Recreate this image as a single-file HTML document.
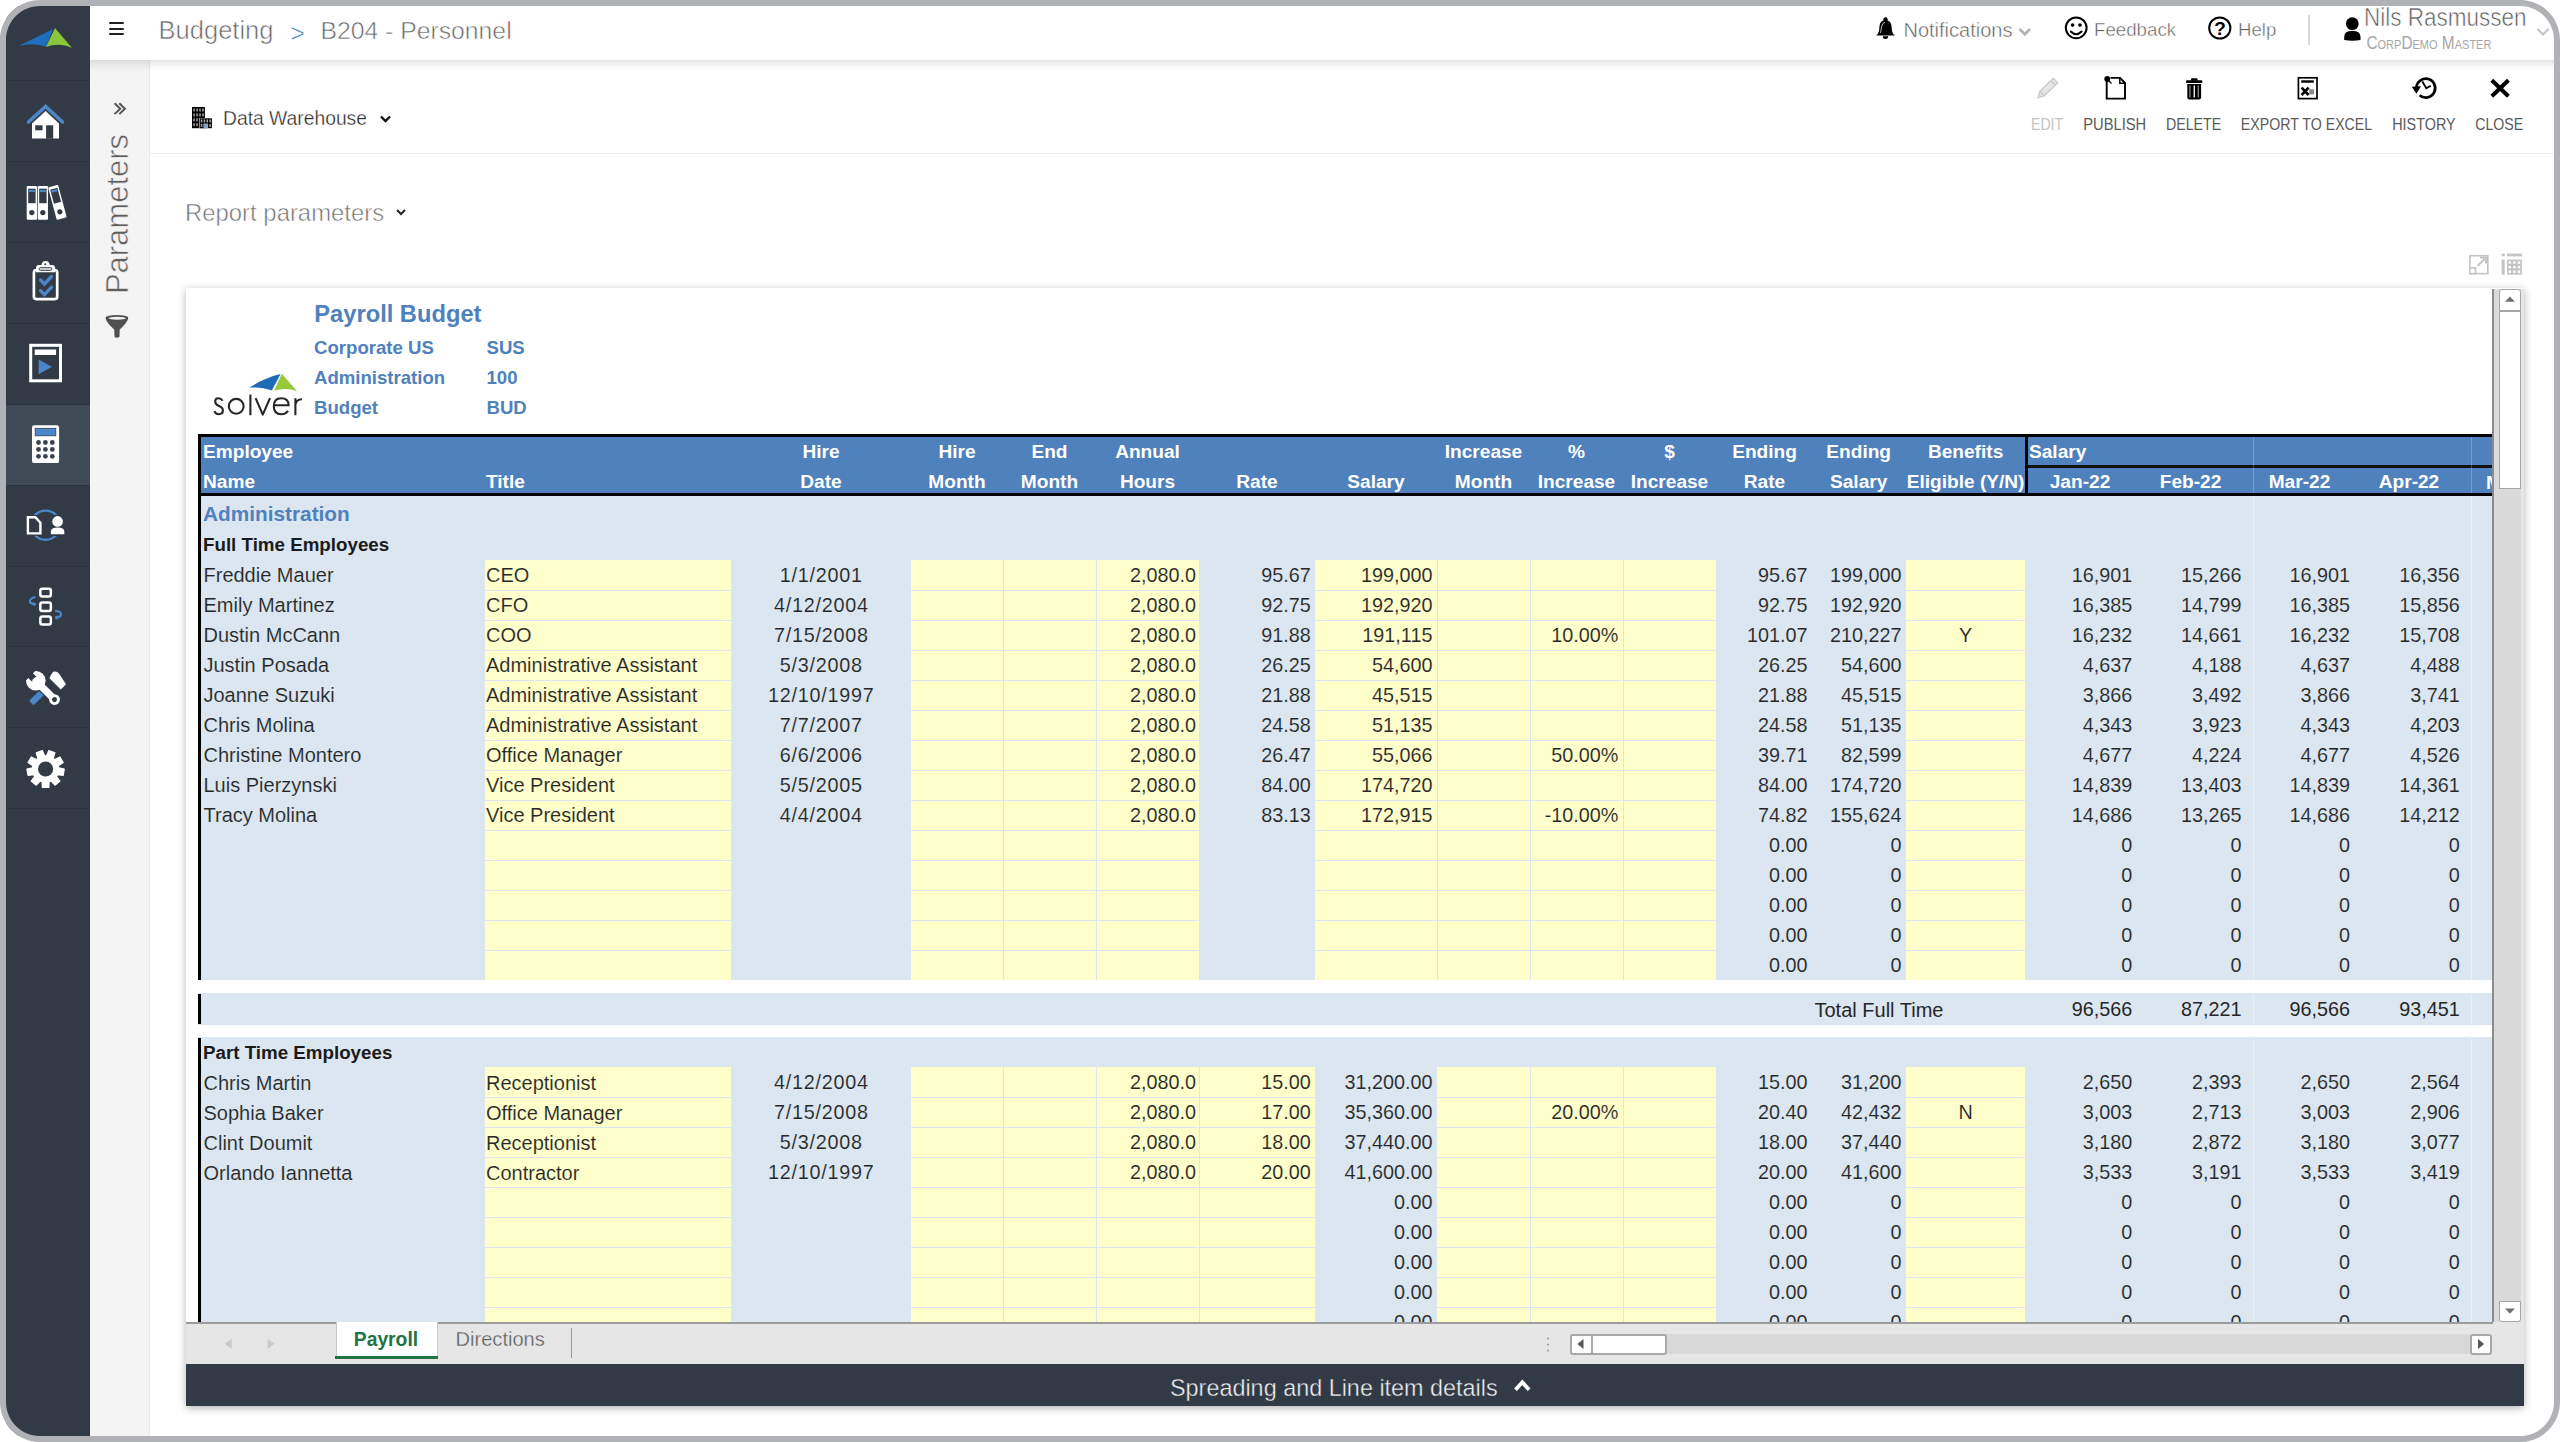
<!DOCTYPE html><html><head><meta charset="utf-8"><style>
html,body{margin:0;padding:0;}
body{width:2560px;height:1442px;position:relative;overflow:hidden;background:#fff;font-family:"Liberation Sans",sans-serif;}
.t{position:absolute;white-space:nowrap;}
.r{position:absolute;}
svg{position:absolute;overflow:visible;}
</style></head><body>
<div class="r" style="left:6px;top:6px;width:84px;height:1430px;background:#323a45;"></div>
<div class="r" style="left:6px;top:405px;width:84px;height:80px;background:#404a57;"></div>
<div class="r" style="left:6px;top:80px;width:84px;height:1px;background:#2b323b;"></div>
<div class="r" style="left:6px;top:161px;width:84px;height:1px;background:#2b323b;"></div>
<div class="r" style="left:6px;top:242px;width:84px;height:1px;background:#2b323b;"></div>
<div class="r" style="left:6px;top:323px;width:84px;height:1px;background:#2b323b;"></div>
<div class="r" style="left:6px;top:404px;width:84px;height:1px;background:#2b323b;"></div>
<div class="r" style="left:6px;top:485px;width:84px;height:1px;background:#2b323b;"></div>
<div class="r" style="left:6px;top:566px;width:84px;height:1px;background:#2b323b;"></div>
<div class="r" style="left:6px;top:646px;width:84px;height:1px;background:#2b323b;"></div>
<div class="r" style="left:6px;top:727px;width:84px;height:1px;background:#2b323b;"></div>
<div class="r" style="left:6px;top:808px;width:84px;height:1px;background:#2b323b;"></div>
<svg style="left:0px;top:0px" width="100" height="60" viewBox="0 0 100 60"><path d="M19,46 C30,40 40,36 53,29 L46,47 C37,43 28,44 19,46 Z" fill="#1f6fbf"/><path d="M55,28 L72,48 C63,44 55,44 46,47 Z" fill="#8cc43c"/></svg>
<svg style="left:0px;top:90px" width="100" height="60" viewBox="0 90 100 60"><polyline points="28.5,122 45.6,106.5 62.5,122" fill="none" stroke="#4a86c8" stroke-width="3.6" stroke-linecap="round" stroke-linejoin="miter"/><path d="M32,138.5 L32,123.5 L45.6,111 L59,123.5 L59,138.5 Z" fill="#fff"/><rect x="35.2" y="125.3" width="7.3" height="5" fill="#323a45"/><rect x="46.1" y="125.3" width="7.1" height="13.4" fill="#323a45"/></svg>
<svg style="left:0px;top:170px" width="100" height="60" viewBox="0 170 100 60"><rect x="26.7" y="186.1" width="10.3" height="33.6" rx="1" fill="#fff"/><rect x="28.2" y="188.7" width="7.4" height="14.5" fill="#323a45"/><rect x="28.9" y="189.9" width="6" height="2.2" fill="#4a86c8"/><circle cx="31.799999999999997" cy="212.6" r="2.6" fill="#323a45"/><rect x="37.7" y="186.1" width="10.3" height="33.6" rx="1" fill="#fff"/><rect x="39.2" y="188.7" width="7.4" height="14.5" fill="#323a45"/><rect x="39.900000000000006" y="189.9" width="6" height="2.2" fill="#4a86c8"/><circle cx="42.800000000000004" cy="212.6" r="2.6" fill="#323a45"/><g transform="rotate(-15 57.4 202.4)"><rect x="52.25" y="185.6" width="10.3" height="33.6" rx="1" fill="#fff"/><rect x="53.75" y="188.2" width="7.4" height="14.5" fill="#323a45"/><rect x="54.45" y="189.4" width="6" height="2.2" fill="#4a86c8"/><circle cx="57.35" cy="212.1" r="2.6" fill="#323a45"/></g></svg>
<svg style="left:0px;top:250px" width="100" height="60" viewBox="0 250 100 60"><rect x="33.9" y="270" width="23.3" height="29.1" rx="2.5" fill="none" stroke="#fff" stroke-width="2.7"/><path d="M36,272.2 L36,268 Q36,265 39,265 L41.5,265 Q42,261 45.6,261 Q49.2,261 49.7,265 L52,265 Q55.1,265 55.1,268 L55.1,272.2 Z" fill="#fff"/><rect x="39.2" y="267.6" width="12.5" height="2.8" rx="1.2" fill="#d8d8d8" stroke="#323a45" stroke-width="0.9"/><circle cx="45.2" cy="264.2" r="1" fill="#323a45"/><polyline points="40.5,280 44.4,284 51.5,276.5" fill="none" stroke="#4a86c8" stroke-width="3.3" stroke-linecap="round"/><polyline points="40.5,290.7 44.4,294.7 51.5,287.2" fill="none" stroke="#4a86c8" stroke-width="3.3" stroke-linecap="round"/></svg>
<svg style="left:0px;top:330px" width="100" height="60" viewBox="0 330 100 60"><rect x="30.7" y="345.3" width="29.8" height="35.5" fill="none" stroke="#fff" stroke-width="3"/><rect x="34.7" y="349.5" width="21.4" height="5.5" fill="#fff"/><path d="M38.7,359.4 L38.7,374.3 L52,366.8 Z" fill="#4a86c8"/></svg>
<svg style="left:0px;top:410px" width="100" height="60" viewBox="0 410 100 60"><rect x="32" y="425.2" width="27.1" height="37.9" rx="2.2" fill="#fff"/><rect x="35.2" y="428.3" width="20.6" height="7.5" fill="#4a86c8" stroke="#2f4257" stroke-width="0.8"/><circle cx="38.5" cy="442.5" r="2.4" fill="#3a4350"/><circle cx="38.5" cy="449.4" r="2.4" fill="#3a4350"/><circle cx="38.5" cy="456.3" r="2.4" fill="#3a4350"/><circle cx="45.4" cy="442.5" r="2.4" fill="#3a4350"/><circle cx="45.4" cy="449.4" r="2.4" fill="#3a4350"/><circle cx="45.4" cy="456.3" r="2.4" fill="#3a4350"/><circle cx="52.3" cy="442.5" r="2.4" fill="#3a4350"/><circle cx="52.3" cy="449.4" r="2.4" fill="#3a4350"/><circle cx="52.3" cy="456.3" r="2.4" fill="#3a4350"/></svg>
<svg style="left:0px;top:490px" width="100" height="60" viewBox="0 490 100 60"><circle cx="45.6" cy="525.2" r="14.6" fill="none" stroke="#4a86c8" stroke-width="2.4"/><path d="M25.5,515 L36,515 L42.8,522 L42.8,535.8 L25.5,535.8 Z" fill="#323a45"/><path d="M27.9,517.3 L35.3,517.3 L40.4,522.8 L40.4,533.4 L27.9,533.4 Z" fill="none" stroke="#fff" stroke-width="2.4" stroke-linejoin="miter"/><circle cx="57.6" cy="521.4" r="7" fill="#323a45"/><path d="M49,536 L49,531 Q49,525.5 57.6,525.5 Q66.2,525.5 66.2,531 L66.2,536 Z" fill="#323a45"/><circle cx="57.6" cy="521.4" r="5.3" fill="#fff"/><path d="M50.9,534.3 L50.9,531.5 Q50.9,527.6 57.6,527.6 Q64.3,527.6 64.3,531.5 L64.3,534.3 Z" fill="#fff"/></svg>
<svg style="left:0px;top:570px" width="100" height="60" viewBox="0 570 100 60"><rect x="40.35" y="588.75" width="10.5" height="7.7999999999999545" rx="2" fill="none" stroke="#fff" stroke-width="2.5"/><rect x="40.35" y="602.55" width="10.5" height="8.400000000000091" rx="2" fill="none" stroke="#fff" stroke-width="2.5"/><rect x="40.35" y="616.45" width="10.5" height="8.0" rx="2" fill="none" stroke="#fff" stroke-width="2.5"/><path d="M35.5,597 Q29,598.5 30,602 Q31,604 35.5,604.2" fill="none" stroke="#4a86c8" stroke-width="2.2"/><path d="M33.2,601.8 L36.5,604.3 L33.4,606.5 Z" fill="#4a86c8"/><path d="M55.2,610.8 Q61.8,611.5 61,615 Q60,617.5 55.4,617.6" fill="none" stroke="#4a86c8" stroke-width="2.2"/><path d="M57.6,615.2 L54.4,617.6 L57.5,619.9 Z" fill="#4a86c8"/></svg>
<svg style="left:0px;top:650px" width="100" height="60" viewBox="0 650 100 60"><g transform="translate(20,659)"><g transform="rotate(-45 17 38.5)"><rect x="9" y="35.3" width="17" height="6.4" rx="1.2" fill="#4a86c8"/></g><g transform="rotate(45 37 21.5)"><path d="M28,18 Q30,14.6 34,15.2 L46,17.8 L46,25.2 L30,25.2 Q28.5,22 28,18 Z" fill="#fff"/></g><g fill="#323a45" stroke="#323a45" stroke-width="2.6"><g transform="rotate(-45 13.6 19.6)"><path d="M7.1,15.400000000000002 A9.8,9.8 0 1 0 20.1,15.400000000000002 L16.9,15.400000000000002 L16.9,21.1 Q13.6,24.1 10.3,21.1 L10.3,15.400000000000002 Z" /><rect x="10.0" y="19.6" width="7.2" height="29.6" rx="3"/><circle cx="13.6" cy="49.2" r="5.4"/></g></g><g fill="#fff"><g transform="rotate(-45 13.6 19.6)"><path d="M7.1,15.400000000000002 A9.8,9.8 0 1 0 20.1,15.400000000000002 L16.9,15.400000000000002 L16.9,21.1 Q13.6,24.1 10.3,21.1 L10.3,15.400000000000002 Z" /><rect x="10.0" y="19.6" width="7.2" height="29.6" rx="3"/><circle cx="13.6" cy="49.2" r="5.4"/></g></g><g transform="rotate(-45 13.6 19.6)"><circle cx="13.6" cy="49.2" r="2.5" fill="#323a45"/></g></g></svg>
<svg style="left:0px;top:740px" width="100" height="60" viewBox="0 740 100 60"><path d="M46.64,755.84 L48.85,750.58 L54.95,752.81 L53.27,758.25 L54.85,759.59 L59.93,756.98 L63.17,762.60 L58.38,765.69 L58.74,767.73 L64.30,769.00 L63.17,775.40 L57.51,774.68 L56.48,776.48 L59.93,781.02 L54.95,785.19 L51.07,781.01 L49.13,781.72 L48.85,787.42 L42.35,787.42 L42.07,781.72 L40.13,781.01 L36.25,785.19 L31.27,781.02 L34.72,776.48 L33.69,774.68 L28.03,775.40 L26.90,769.00 L32.46,767.73 L32.82,765.69 L28.03,762.60 L31.27,756.98 L36.35,759.59 L37.93,758.25 L36.25,752.81 L42.35,750.58 L44.56,755.84 Z" fill="#fff" stroke="#fff" stroke-width="1.2" stroke-linejoin="round"/><circle cx="45.6" cy="769" r="7.6" fill="#323a45"/></svg>
<div class="r" style="left:90px;top:6px;width:2464px;height:54px;background:#ffffff;"></div>
<div class="r" style="left:90px;top:60px;width:2464px;height:12px;background:linear-gradient(rgba(0,0,0,0.11),rgba(0,0,0,0.03) 50%,rgba(0,0,0,0));"></div>
<div class="r" style="left:109px;top:22.2px;width:15px;height:1.8999999999999986px;background:#222;border-radius:1px;"></div>
<div class="r" style="left:109px;top:27.8px;width:15px;height:1.8999999999999986px;background:#222;border-radius:1px;"></div>
<div class="r" style="left:109px;top:33.3px;width:15px;height:1.8999999999999986px;background:#222;border-radius:1px;"></div>
<div class="t" style="left:158.60px;top:18.41px;font-size:25.5px;line-height:25.5px;font-weight:400;color:#6a6a6a;-webkit-text-stroke:0.55px #fff;">Budgeting</div>
<div class="t" style="left:290.30px;top:20.94px;font-size:25px;line-height:25px;font-weight:400;color:#3b7cc0;-webkit-text-stroke:0.6px #fff;">&gt;</div>
<div class="t" style="left:320.40px;top:19.05px;font-size:24.75px;line-height:24.75px;font-weight:400;color:#6a6a6a;-webkit-text-stroke:0.55px #fff;">B204 - Personnel</div>
<svg style="left:1860px;top:0px" width="60" height="60" viewBox="1860 0 60 60"><circle cx="1885.5" cy="19.3" r="2.1" fill="#000"/><path d="M1885.5,19.8 Q1880,20.5 1879.5,26 L1879,31 Q1878.5,34 1876,35.5 L1895,35.5 Q1892.5,34 1892,31 L1891.5,26 Q1891,20.5 1885.5,19.8 Z" fill="#000"/><path d="M1882.8,36.3 A2.7,2.7 0 0 0 1888.2,36.3 Z" fill="#000"/><path d="M1885,22.3 Q1882,23 1881.5,27 L1880.5,33" fill="none" stroke="#fff" stroke-width="0.9" opacity="0.8"/></svg>
<div class="t" style="left:1903.50px;top:19.87px;font-size:20px;line-height:20px;font-weight:400;color:#5e5e5e;-webkit-text-stroke:0.45px #fff;">Notifications</div>
<svg style="left:2000px;top:0px" width="60" height="60" viewBox="2000 0 60 60"><polyline points="2019.5,29 2024.8,34.3 2030,29" fill="none" stroke="#b5b5b5" stroke-width="2.7"/></svg>
<svg style="left:2050px;top:0px" width="60" height="60" viewBox="2050 0 60 60"><circle cx="2076.2" cy="27.8" r="10.4" fill="none" stroke="#000" stroke-width="2"/><circle cx="2072.6" cy="25.1" r="1.8" fill="#000"/><circle cx="2080" cy="25.1" r="1.8" fill="#000"/><path d="M2070.8,31.5 Q2076.2,37 2081.6,31.5" fill="none" stroke="#000" stroke-width="2" stroke-linecap="round"/></svg>
<div class="t" style="left:2094.00px;top:20.97px;font-size:18.7px;line-height:18.7px;font-weight:400;color:#5e5e5e;-webkit-text-stroke:0.45px #fff;">Feedback</div>
<svg style="left:2200px;top:0px" width="60" height="60" viewBox="2200 0 60 60"><circle cx="2219.8" cy="28" r="10.6" fill="none" stroke="#000" stroke-width="2"/></svg>
<div class="t" style="left:1620.00px;width:1200px;text-align:center;top:19.12px;font-size:19px;line-height:19px;font-weight:700;color:#000;">?</div>
<div class="t" style="left:2238.00px;top:21.06px;font-size:18.6px;line-height:18.6px;font-weight:400;color:#5e5e5e;-webkit-text-stroke:0.45px #fff;">Help</div>
<div class="r" style="left:2308px;top:15px;width:1.5px;height:30px;background:#d9d9d9;"></div>
<svg style="left:2330px;top:0px" width="60" height="60" viewBox="2330 0 60 60"><circle cx="2352.3" cy="23.7" r="6.4" fill="#000"/><path d="M2344.2,40 L2344.2,37 Q2344.2,30.8 2352.3,30.8 Q2360.5,30.8 2360.5,37 L2360.5,40 Q2352.3,41.5 2344.2,40 Z" fill="#000"/></svg>
<div class="t" style="left:2364.00px;top:8.25px;font-size:22.5px;line-height:22.5px;font-weight:400;color:#5e5e5e;-webkit-text-stroke:0.5px #fff;transform:scaleY(1.12);transform-origin:0 19px;">Nils Rasmussen</div>
<div class="t" style="left:2366.40px;top:35.82px;font-size:15.45px;line-height:15.45px;font-weight:400;color:#a6a6a6;font-variant:small-caps;transform:scaleY(1.13);transform-origin:0 13px;">CorpDemo Master</div>
<svg style="left:2520px;top:0px" width="40" height="60" viewBox="2520 0 40 60"><polyline points="2537.5,29 2543,34.5 2548.5,29" fill="none" stroke="#c4c4c4" stroke-width="2.2"/></svg>
<div class="r" style="left:90px;top:60px;width:59px;height:1376px;background:#f4f4f4;"></div>
<div class="r" style="left:149px;top:60px;width:1px;height:1376px;background:#e8e8e8;"></div>
<div class="r" style="left:90px;top:60px;width:60px;height:12px;background:linear-gradient(rgba(0,0,0,0.11),rgba(0,0,0,0.03) 50%,rgba(0,0,0,0));"></div>
<svg style="left:100px;top:90px" width="40" height="40" viewBox="100 90 40 40"><polyline points="114.6,103.3 120.2,108.7 114.6,114.1" fill="none" stroke="#555" stroke-width="2"/><polyline points="119.3,103.3 124.9,108.7 119.3,114.1" fill="none" stroke="#555" stroke-width="2"/></svg>
<div class="t" style="left:117px;top:213.8px;font-size:31px;line-height:31px;color:#5f5f5f;-webkit-text-stroke:0.6px #f4f4f4;transform:translate(-50%,-50%) rotate(-90deg);">Parameters</div>
<svg style="left:100px;top:300px" width="40" height="50" viewBox="100 300 40 50"><path d="M105.5,317.8 Q105.8,322 114.2,329.6 L114.6,337.2 Q117,338.3 119.5,336.8 L119.7,329.6 Q128,322 128.3,317.8 Z" fill="#505050"/><ellipse cx="116.9" cy="317.6" rx="11.3" ry="2.6" fill="#505050"/><ellipse cx="117.2" cy="318.3" rx="8.6" ry="1.5" fill="#f2f2f2"/></svg>
<div class="r" style="left:150px;top:153px;width:2404px;height:1px;background:#ececec;"></div>
<svg style="left:180px;top:100px" width="40" height="40" viewBox="180 100 40 40"><rect x="192" y="107" width="12.9" height="21.2" fill="#000"/><rect x="193.30" y="108.50" width="1.6" height="3" fill="#9a9a9a"/><rect x="193.30" y="113.40" width="1.6" height="3" fill="#9a9a9a"/><rect x="193.30" y="118.30" width="1.6" height="3" fill="#9a9a9a"/><rect x="193.30" y="123.20" width="1.6" height="3" fill="#9a9a9a"/><rect x="196.25" y="108.50" width="1.6" height="3" fill="#9a9a9a"/><rect x="196.25" y="113.40" width="1.6" height="3" fill="#9a9a9a"/><rect x="196.25" y="118.30" width="1.6" height="3" fill="#9a9a9a"/><rect x="196.25" y="123.20" width="1.6" height="3" fill="#9a9a9a"/><rect x="199.20" y="108.50" width="1.6" height="3" fill="#9a9a9a"/><rect x="199.20" y="113.40" width="1.6" height="3" fill="#9a9a9a"/><rect x="199.20" y="118.30" width="1.6" height="3" fill="#9a9a9a"/><rect x="199.20" y="123.20" width="1.6" height="3" fill="#9a9a9a"/><rect x="202.15" y="108.50" width="1.6" height="3" fill="#9a9a9a"/><rect x="202.15" y="113.40" width="1.6" height="3" fill="#9a9a9a"/><rect x="202.15" y="118.30" width="1.6" height="3" fill="#9a9a9a"/><rect x="202.15" y="123.20" width="1.6" height="3" fill="#9a9a9a"/><rect x="199.1" y="118" width="12.8" height="10.2" fill="#fff"/><rect x="199.6" y="118.3" width="12.3" height="9.9" fill="#000"/><rect x="200.80" y="119.50" width="1.5" height="2.9" fill="#aaa"/><rect x="200.80" y="124.00" width="1.5" height="2.9" fill="#aaa"/><rect x="203.65" y="119.50" width="1.5" height="2.9" fill="#aaa"/><rect x="203.65" y="124.00" width="1.5" height="2.9" fill="#aaa"/><rect x="206.50" y="119.50" width="1.5" height="2.9" fill="#aaa"/><rect x="206.50" y="124.00" width="1.5" height="2.9" fill="#aaa"/><rect x="209.35" y="119.50" width="1.5" height="2.9" fill="#aaa"/><rect x="209.35" y="124.00" width="1.5" height="2.9" fill="#aaa"/><rect x="203.5" y="123.5" width="4.6" height="4.7" fill="#8aa3c4"/></svg>
<div class="t" style="left:223.00px;top:109.26px;font-size:19.3px;line-height:19.3px;font-weight:400;color:#2a2a2a;-webkit-text-stroke:0.3px #fff;">Data Warehouse</div>
<svg style="left:370px;top:100px" width="40" height="40" viewBox="370 100 40 40"><polyline points="381,116.5 385.5,121 390,116.5" fill="none" stroke="#111" stroke-width="2.3"/></svg>
<div class="t" style="left:185.00px;top:201.27px;font-size:23.9px;line-height:23.9px;font-weight:400;color:#707070;-webkit-text-stroke:0.55px #fff;">Report parameters</div>
<svg style="left:380px;top:195px" width="40" height="40" viewBox="380 195 40 40"><polyline points="397,210 401,214 405,210" fill="none" stroke="#222" stroke-width="2"/></svg>
<svg style="left:2020px;top:66px" width="520" height="50" viewBox="2020 66 520 50"><g stroke="#cdcdcd" fill="#e6e6e6" stroke-width="1.5"><path d="M2038,97.6 L2039.8,91.5 L2053.3,78.3 L2057.7,82.7 L2044.2,95.8 Z"/><path d="M2050.8,80.8 L2055.2,85.2 M2039.8,91.5 L2044.2,95.8" fill="none"/></g><path d="M2106.7,81 L2106.7,98.6 L2125,98.6 L2125,83 L2120,77.9 L2110.5,77.9" fill="none" stroke="#000" stroke-width="1.9"/><path d="M2119.8,78 L2119.8,83.2 L2125,83.2" fill="none" stroke="#000" stroke-width="1.5"/><circle cx="2107.2" cy="79" r="2.9" fill="#000"/><path d="M2108,80 L2111.5,83.5" stroke="#000" stroke-width="1.2"/><rect x="2186" y="80.3" width="16.4" height="2.8" rx="1" fill="#000"/><rect x="2191" y="78.2" width="6.6" height="2.5" rx="1" fill="#000"/><path d="M2187.3,84 L2201.1,84 L2201.1,97.5 Q2201.1,99.5 2199,99.5 L2189.4,99.5 Q2187.3,99.5 2187.3,97.5 Z" fill="#000"/><rect x="2189.3" y="85.5" width="1.3" height="12" fill="#888"/><rect x="2193.6" y="85.5" width="1.3" height="12" fill="#fff"/><rect x="2197.6" y="85.5" width="1.3" height="12" fill="#888"/><rect x="2298.4" y="77.8" width="18.6" height="20.8" fill="none" stroke="#000" stroke-width="1.7"/><rect x="2301.2" y="80.3" width="12.6" height="2.4" fill="#000"/><path d="M2301.6,87.6 L2308.6,95 M2308.6,87.6 L2301.6,95" stroke="#000" stroke-width="2.7"/><rect x="2309.3" y="89.2" width="4.6" height="5.2" fill="#8a8a8a"/><path d="M2416.4,88.5 A9.4,9.4 0 1 1 2419.6,95.2" fill="none" stroke="#000" stroke-width="2.7"/><path d="M2411.8,86.8 L2421,86.3 L2416.5,93.8 Z" fill="#000"/><path d="M2422.3,81.5 L2426.3,88.3 L2430.8,85.8" fill="none" stroke="#000" stroke-width="1.8"/><path d="M2491.8,80.2 L2508.4,96.3 M2508.4,80.2 L2491.8,96.3" stroke="#000" stroke-width="4"/></svg>
<div class="t" style="left:2031.00px;top:118.06px;font-size:14.1px;line-height:14.1px;font-weight:400;color:#c4c4c4;transform:scaleY(1.15);transform-origin:0 85%;">EDIT</div>
<div class="t" style="left:2083.30px;top:117.56px;font-size:14.7px;line-height:14.7px;font-weight:400;color:#5a5a5a;transform:scaleY(1.15);transform-origin:0 85%;">PUBLISH</div>
<div class="t" style="left:2166.00px;top:117.98px;font-size:14.2px;line-height:14.2px;font-weight:400;color:#5a5a5a;transform:scaleY(1.15);transform-origin:0 85%;">DELETE</div>
<div class="t" style="left:2240.80px;top:117.98px;font-size:14.2px;line-height:14.2px;font-weight:400;color:#5a5a5a;transform:scaleY(1.15);transform-origin:0 85%;">EXPORT TO EXCEL</div>
<div class="t" style="left:2392.20px;top:117.81px;font-size:14.4px;line-height:14.4px;font-weight:400;color:#5a5a5a;transform:scaleY(1.15);transform-origin:0 85%;">HISTORY</div>
<div class="t" style="left:2475.30px;top:118.02px;font-size:14.15px;line-height:14.15px;font-weight:400;color:#5a5a5a;transform:scaleY(1.15);transform-origin:0 85%;">CLOSE</div>
<svg style="left:2460px;top:245px" width="70" height="40" viewBox="2460 245 70 40"><rect x="2469.9" y="255.7" width="17.9" height="17.9" fill="none" stroke="#c4c4c4" stroke-width="1.6"/><rect x="2469.9" y="267.9" width="5.6" height="5.7" fill="#fff" stroke="#c4c4c4" stroke-width="1.6"/><path d="M2477.5,266 L2486,257.5 M2480,257.5 L2486,257.5 L2486,263.5" fill="none" stroke="#c4c4c4" stroke-width="2"/><rect x="2501.6" y="253.6" width="3.1" height="2.6" fill="#c4c4c4"/><rect x="2501.6" y="259.6" width="3.1" height="15" fill="#c4c4c4"/><rect x="2507" y="253.6" width="14.9" height="2.8" fill="#c4c4c4"/><rect x="2507" y="259.6" width="14.9" height="15" fill="#c4c4c4"/><rect x="2508.6" y="261.3" width="2.4" height="2.4" fill="#fff"/><rect x="2508.6" y="265.9" width="2.4" height="2.4" fill="#fff"/><rect x="2508.6" y="270.5" width="2.4" height="2.4" fill="#fff"/><rect x="2513.2" y="261.3" width="2.4" height="2.4" fill="#fff"/><rect x="2513.2" y="265.9" width="2.4" height="2.4" fill="#fff"/><rect x="2513.2" y="270.5" width="2.4" height="2.4" fill="#fff"/><rect x="2517.8" y="261.3" width="2.4" height="2.4" fill="#fff"/><rect x="2517.8" y="265.9" width="2.4" height="2.4" fill="#fff"/><rect x="2517.8" y="270.5" width="2.4" height="2.4" fill="#fff"/></svg>
<div class="r" style="left:186px;top:288px;width:2338px;height:1118px;background:#fff;box-shadow:0 2px 8px rgba(0,0,0,0.30);"></div>
<div class="t" style="left:314.30px;top:302.94px;font-size:23.7px;line-height:23.7px;font-weight:700;color:#4f81bd;">Payroll Budget</div>
<div class="t" style="left:314.00px;top:339.06px;font-size:18.6px;line-height:18.6px;font-weight:700;color:#4f81bd;">Corporate US</div>
<div class="t" style="left:486.50px;top:339.06px;font-size:18.6px;line-height:18.6px;font-weight:700;color:#4f81bd;">SUS</div>
<div class="t" style="left:314.00px;top:368.66px;font-size:18.6px;line-height:18.6px;font-weight:700;color:#4f81bd;">Administration</div>
<div class="t" style="left:486.50px;top:368.66px;font-size:18.6px;line-height:18.6px;font-weight:700;color:#4f81bd;">100</div>
<div class="t" style="left:314.00px;top:398.66px;font-size:18.6px;line-height:18.6px;font-weight:700;color:#4f81bd;">Budget</div>
<div class="t" style="left:486.50px;top:398.66px;font-size:18.6px;line-height:18.6px;font-weight:700;color:#4f81bd;">BUD</div>
<svg style="left:240px;top:365px" width="70" height="35" viewBox="240 365 70 35"><path d="M249.2,387.8 C258,382 268,377 280.6,374 L271.8,390.6 C264,387.5 256,386.8 249.2,387.8 Z" fill="#1f6ab5"/><path d="M281.8,373.8 L297.2,391.2 C290,388.5 282,388.3 274.2,390.6 Z" fill="#98c83c"/></svg>
<svg style="left:205px;top:385px" width="110" height="40" viewBox="205 385 110 40"><g fill="none" stroke="#262626" stroke-width="2.1"><path d="M222.6,400.8 Q221,398.3 218.4,398.3 Q215.2,398.3 215.2,401.6 Q215.2,404.6 219,406 Q222.9,407.4 222.9,410.6 Q222.9,414.2 218.8,414.2 Q215.6,414.2 214.3,411.2"/><circle cx="236.2" cy="406.3" r="7.4"/><path d="M250.4,394.6 L250.4,415.2"/><path d="M255.6,398.2 L262.8,414.6 L270,398.2" stroke-linejoin="round"/><path d="M273.8,405.3 L288.6,405.3 Q288.6,398.3 281.2,398.3 Q273.8,398.3 273.8,406.3 Q273.8,414.2 281.2,414.2 Q286,414.2 288,410.8"/><path d="M295.4,415.2 L295.4,398.2 M295.4,405 Q296,399.2 302,399.2"/></g></svg>
<div class="r" style="left:198px;top:434px;width:2295px;height:3px;background:#000;"></div>
<div class="r" style="left:198px;top:437px;width:2295px;height:56px;background:#4f81bd;"></div>
<div class="r" style="left:198px;top:493px;width:2295px;height:3px;background:#000;"></div>
<div class="r" style="left:2025px;top:434px;width:3px;height:62px;background:#000;"></div>
<div class="r" style="left:2028px;top:465px;width:465px;height:2.5px;background:#111;"></div>
<div class="r" style="left:198px;top:496px;width:2295px;height:484px;background:#dce6f1;"></div>
<div class="r" style="left:198px;top:993px;width:2295px;height:31.5px;background:#dce6f1;"></div>
<div class="r" style="left:198px;top:1037px;width:2295px;height:285px;background:#dce6f1;"></div>
<div class="r" style="left:198px;top:434px;width:3px;height:546px;background:#000;"></div>
<div class="r" style="left:198px;top:994px;width:3px;height:30px;background:#000;"></div>
<div class="r" style="left:198px;top:1038px;width:3px;height:284px;background:#000;"></div>
<div class="r" style="left:485px;top:560px;width:246px;height:420px;background:#ffffcc;"></div>
<div class="r" style="left:911px;top:560px;width:92px;height:420px;background:#ffffcc;"></div>
<div class="r" style="left:1003px;top:560px;width:93px;height:420px;background:#ffffcc;"></div>
<div class="r" style="left:1096px;top:560px;width:103px;height:420px;background:#ffffcc;"></div>
<div class="r" style="left:1315px;top:560px;width:122px;height:420px;background:#ffffcc;"></div>
<div class="r" style="left:1437px;top:560px;width:93px;height:420px;background:#ffffcc;"></div>
<div class="r" style="left:1530px;top:560px;width:93px;height:420px;background:#ffffcc;"></div>
<div class="r" style="left:1623px;top:560px;width:93px;height:420px;background:#ffffcc;"></div>
<div class="r" style="left:1906px;top:560px;width:119px;height:420px;background:#ffffcc;"></div>
<div class="r" style="left:1003px;top:560px;width:1px;height:420px;background:#dce6f1;"></div>
<div class="r" style="left:1096px;top:560px;width:1px;height:420px;background:#dce6f1;"></div>
<div class="r" style="left:1437px;top:560px;width:1px;height:420px;background:#dce6f1;"></div>
<div class="r" style="left:1530px;top:560px;width:1px;height:420px;background:#dce6f1;"></div>
<div class="r" style="left:1623px;top:560px;width:1px;height:420px;background:#dce6f1;"></div>
<div class="r" style="left:485px;top:1067px;width:246px;height:255px;background:#ffffcc;"></div>
<div class="r" style="left:911px;top:1067px;width:92px;height:255px;background:#ffffcc;"></div>
<div class="r" style="left:1003px;top:1067px;width:93px;height:255px;background:#ffffcc;"></div>
<div class="r" style="left:1096px;top:1067px;width:103px;height:255px;background:#ffffcc;"></div>
<div class="r" style="left:1199px;top:1067px;width:116px;height:255px;background:#ffffcc;"></div>
<div class="r" style="left:1437px;top:1067px;width:93px;height:255px;background:#ffffcc;"></div>
<div class="r" style="left:1530px;top:1067px;width:93px;height:255px;background:#ffffcc;"></div>
<div class="r" style="left:1623px;top:1067px;width:93px;height:255px;background:#ffffcc;"></div>
<div class="r" style="left:1906px;top:1067px;width:119px;height:255px;background:#ffffcc;"></div>
<div class="r" style="left:1003px;top:1067px;width:1px;height:255px;background:#dce6f1;"></div>
<div class="r" style="left:1096px;top:1067px;width:1px;height:255px;background:#dce6f1;"></div>
<div class="r" style="left:1199px;top:1067px;width:1px;height:255px;background:#dce6f1;"></div>
<div class="r" style="left:1530px;top:1067px;width:1px;height:255px;background:#dce6f1;"></div>
<div class="r" style="left:1623px;top:1067px;width:1px;height:255px;background:#dce6f1;"></div>
<div class="r" style="left:201px;top:590px;width:2292px;height:1px;background:#dce6f1;"></div>
<div class="r" style="left:201px;top:620px;width:2292px;height:1px;background:#dce6f1;"></div>
<div class="r" style="left:201px;top:650px;width:2292px;height:1px;background:#dce6f1;"></div>
<div class="r" style="left:201px;top:680px;width:2292px;height:1px;background:#dce6f1;"></div>
<div class="r" style="left:201px;top:710px;width:2292px;height:1px;background:#dce6f1;"></div>
<div class="r" style="left:201px;top:740px;width:2292px;height:1px;background:#dce6f1;"></div>
<div class="r" style="left:201px;top:770px;width:2292px;height:1px;background:#dce6f1;"></div>
<div class="r" style="left:201px;top:800px;width:2292px;height:1px;background:#dce6f1;"></div>
<div class="r" style="left:201px;top:830px;width:2292px;height:1px;background:#dce6f1;"></div>
<div class="r" style="left:201px;top:860px;width:2292px;height:1px;background:#dce6f1;"></div>
<div class="r" style="left:201px;top:890px;width:2292px;height:1px;background:#dce6f1;"></div>
<div class="r" style="left:201px;top:920px;width:2292px;height:1px;background:#dce6f1;"></div>
<div class="r" style="left:201px;top:950px;width:2292px;height:1px;background:#dce6f1;"></div>
<div class="r" style="left:201px;top:1097px;width:2292px;height:1px;background:#dce6f1;"></div>
<div class="r" style="left:201px;top:1127px;width:2292px;height:1px;background:#dce6f1;"></div>
<div class="r" style="left:201px;top:1157px;width:2292px;height:1px;background:#dce6f1;"></div>
<div class="r" style="left:201px;top:1187px;width:2292px;height:1px;background:#dce6f1;"></div>
<div class="r" style="left:201px;top:1217px;width:2292px;height:1px;background:#dce6f1;"></div>
<div class="r" style="left:201px;top:1247px;width:2292px;height:1px;background:#dce6f1;"></div>
<div class="r" style="left:201px;top:1277px;width:2292px;height:1px;background:#dce6f1;"></div>
<div class="r" style="left:201px;top:1307px;width:2292px;height:1px;background:#dce6f1;"></div>
<div class="r" style="left:2253px;top:437px;width:1px;height:56px;background:rgba(255,255,255,0.22);"></div>
<div class="r" style="left:2253px;top:496px;width:1px;height:484px;background:rgba(255,255,255,0.35);"></div>
<div class="r" style="left:2253px;top:994px;width:1px;height:30px;background:rgba(255,255,255,0.35);"></div>
<div class="r" style="left:2253px;top:1038px;width:1px;height:284px;background:rgba(255,255,255,0.35);"></div>
<div class="r" style="left:2471px;top:437px;width:1px;height:56px;background:rgba(255,255,255,0.22);"></div>
<div class="r" style="left:2471px;top:496px;width:1px;height:484px;background:rgba(255,255,255,0.35);"></div>
<div class="r" style="left:2471px;top:994px;width:1px;height:30px;background:rgba(255,255,255,0.35);"></div>
<div class="r" style="left:2471px;top:1038px;width:1px;height:284px;background:rgba(255,255,255,0.35);"></div>
<div class="t" style="left:203.00px;top:442.03px;font-size:19.1px;line-height:19.1px;font-weight:700;color:#ffffff;">Employee</div>
<div class="t" style="left:203.00px;top:472.13px;font-size:19.1px;line-height:19.1px;font-weight:700;color:#ffffff;">Name</div>
<div class="t" style="left:486.00px;top:472.13px;font-size:19.1px;line-height:19.1px;font-weight:700;color:#ffffff;">Title</div>
<div class="t" style="left:221.00px;width:1200px;text-align:center;top:442.03px;font-size:19.1px;line-height:19.1px;font-weight:700;color:#ffffff;">Hire</div>
<div class="t" style="left:221.00px;width:1200px;text-align:center;top:472.13px;font-size:19.1px;line-height:19.1px;font-weight:700;color:#ffffff;">Date</div>
<div class="t" style="left:357.00px;width:1200px;text-align:center;top:442.03px;font-size:19.1px;line-height:19.1px;font-weight:700;color:#ffffff;">Hire</div>
<div class="t" style="left:357.00px;width:1200px;text-align:center;top:472.13px;font-size:19.1px;line-height:19.1px;font-weight:700;color:#ffffff;">Month</div>
<div class="t" style="left:449.50px;width:1200px;text-align:center;top:442.03px;font-size:19.1px;line-height:19.1px;font-weight:700;color:#ffffff;">End</div>
<div class="t" style="left:449.50px;width:1200px;text-align:center;top:472.13px;font-size:19.1px;line-height:19.1px;font-weight:700;color:#ffffff;">Month</div>
<div class="t" style="left:547.50px;width:1200px;text-align:center;top:442.03px;font-size:19.1px;line-height:19.1px;font-weight:700;color:#ffffff;">Annual</div>
<div class="t" style="left:547.50px;width:1200px;text-align:center;top:472.13px;font-size:19.1px;line-height:19.1px;font-weight:700;color:#ffffff;">Hours</div>
<div class="t" style="left:657.00px;width:1200px;text-align:center;top:472.13px;font-size:19.1px;line-height:19.1px;font-weight:700;color:#ffffff;">Rate</div>
<div class="t" style="left:776.00px;width:1200px;text-align:center;top:472.13px;font-size:19.1px;line-height:19.1px;font-weight:700;color:#ffffff;">Salary</div>
<div class="t" style="left:883.50px;width:1200px;text-align:center;top:442.03px;font-size:19.1px;line-height:19.1px;font-weight:700;color:#ffffff;">Increase</div>
<div class="t" style="left:883.50px;width:1200px;text-align:center;top:472.13px;font-size:19.1px;line-height:19.1px;font-weight:700;color:#ffffff;">Month</div>
<div class="t" style="left:976.50px;width:1200px;text-align:center;top:442.03px;font-size:19.1px;line-height:19.1px;font-weight:700;color:#ffffff;">%</div>
<div class="t" style="left:976.50px;width:1200px;text-align:center;top:472.13px;font-size:19.1px;line-height:19.1px;font-weight:700;color:#ffffff;">Increase</div>
<div class="t" style="left:1069.50px;width:1200px;text-align:center;top:442.03px;font-size:19.1px;line-height:19.1px;font-weight:700;color:#ffffff;">$</div>
<div class="t" style="left:1069.50px;width:1200px;text-align:center;top:472.13px;font-size:19.1px;line-height:19.1px;font-weight:700;color:#ffffff;">Increase</div>
<div class="t" style="left:1164.50px;width:1200px;text-align:center;top:442.03px;font-size:19.1px;line-height:19.1px;font-weight:700;color:#ffffff;">Ending</div>
<div class="t" style="left:1164.50px;width:1200px;text-align:center;top:472.13px;font-size:19.1px;line-height:19.1px;font-weight:700;color:#ffffff;">Rate</div>
<div class="t" style="left:1258.70px;width:1200px;text-align:center;top:442.03px;font-size:19.1px;line-height:19.1px;font-weight:700;color:#ffffff;">Ending</div>
<div class="t" style="left:1258.70px;width:1200px;text-align:center;top:472.13px;font-size:19.1px;line-height:19.1px;font-weight:700;color:#ffffff;">Salary</div>
<div class="t" style="left:1365.60px;width:1200px;text-align:center;top:442.03px;font-size:19.1px;line-height:19.1px;font-weight:700;color:#ffffff;">Benefits</div>
<div class="t" style="left:1365.60px;width:1200px;text-align:center;top:472.13px;font-size:19.1px;line-height:19.1px;font-weight:700;color:#ffffff;">Eligible (Y/N)</div>
<div class="t" style="left:2029.00px;top:442.03px;font-size:19.1px;line-height:19.1px;font-weight:700;color:#ffffff;">Salary</div>
<div class="t" style="left:1480.00px;width:1200px;text-align:center;top:472.13px;font-size:19.1px;line-height:19.1px;font-weight:700;color:#ffffff;">Jan-22</div>
<div class="t" style="left:1590.50px;width:1200px;text-align:center;top:472.13px;font-size:19.1px;line-height:19.1px;font-weight:700;color:#ffffff;">Feb-22</div>
<div class="t" style="left:1699.50px;width:1200px;text-align:center;top:472.13px;font-size:19.1px;line-height:19.1px;font-weight:700;color:#ffffff;">Mar-22</div>
<div class="t" style="left:1809.00px;width:1200px;text-align:center;top:472.13px;font-size:19.1px;line-height:19.1px;font-weight:700;color:#ffffff;">Apr-22</div>
<div style="position:absolute;left:2464px;top:437px;width:29px;height:56px;overflow:hidden;">
<div class="t" style="left:22.00px;top:35.83px;font-size:19.1px;line-height:19.1px;font-weight:700;color:#ffffff;">May-22</div>
</div>
<div class="t" style="left:203.00px;top:504.39px;font-size:20.8px;line-height:20.8px;font-weight:700;color:#4f81bd;">Administration</div>
<div class="t" style="left:203.00px;top:536.13px;font-size:18.75px;line-height:18.75px;font-weight:700;color:#1a1a1a;">Full Time Employees</div>
<div class="t" style="left:203.50px;top:565.07px;font-size:20px;line-height:20px;font-weight:400;color:#262626;-webkit-text-stroke:0.12px #dce6f1;">Freddie Mauer</div>
<div class="t" style="left:486.00px;top:565.07px;font-size:20px;line-height:20px;font-weight:400;color:#262626;-webkit-text-stroke:0.12px #ffffcc;">CEO</div>
<div class="t" style="left:221.30px;width:1200px;text-align:center;top:565.84px;font-size:19.8px;line-height:19.8px;font-weight:400;color:#262626;letter-spacing:0.75px;-webkit-text-stroke:0.12px #dce6f1;">1/1/2001</div>
<div class="t" style="right:1364.00px;text-align:right;top:565.84px;font-size:19.8px;line-height:19.8px;font-weight:400;color:#262626;-webkit-text-stroke:0.12px #ffffcc;">2,080.0</div>
<div class="t" style="right:1249.20px;text-align:right;top:565.84px;font-size:19.8px;line-height:19.8px;font-weight:400;color:#262626;-webkit-text-stroke:0.12px #dce6f1;">95.67</div>
<div class="t" style="right:1127.60px;text-align:right;top:565.84px;font-size:19.8px;line-height:19.8px;font-weight:400;color:#262626;-webkit-text-stroke:0.12px #ffffcc;">199,000</div>
<div class="t" style="right:752.40px;text-align:right;top:565.84px;font-size:19.8px;line-height:19.8px;font-weight:400;color:#262626;-webkit-text-stroke:0.12px #dce6f1;">95.67</div>
<div class="t" style="right:658.60px;text-align:right;top:565.84px;font-size:19.8px;line-height:19.8px;font-weight:400;color:#262626;-webkit-text-stroke:0.12px #dce6f1;">199,000</div>
<div class="t" style="right:427.80px;text-align:right;top:565.84px;font-size:19.8px;line-height:19.8px;font-weight:400;color:#262626;-webkit-text-stroke:0.12px #dce6f1;">16,901</div>
<div class="t" style="right:318.50px;text-align:right;top:565.84px;font-size:19.8px;line-height:19.8px;font-weight:400;color:#262626;-webkit-text-stroke:0.12px #dce6f1;">15,266</div>
<div class="t" style="right:210.10px;text-align:right;top:565.84px;font-size:19.8px;line-height:19.8px;font-weight:400;color:#262626;-webkit-text-stroke:0.12px #dce6f1;">16,901</div>
<div class="t" style="right:100.30px;text-align:right;top:565.84px;font-size:19.8px;line-height:19.8px;font-weight:400;color:#262626;-webkit-text-stroke:0.12px #dce6f1;">16,356</div>
<div class="t" style="left:203.50px;top:595.07px;font-size:20px;line-height:20px;font-weight:400;color:#262626;-webkit-text-stroke:0.12px #dce6f1;">Emily Martinez</div>
<div class="t" style="left:486.00px;top:595.07px;font-size:20px;line-height:20px;font-weight:400;color:#262626;-webkit-text-stroke:0.12px #ffffcc;">CFO</div>
<div class="t" style="left:221.30px;width:1200px;text-align:center;top:595.84px;font-size:19.8px;line-height:19.8px;font-weight:400;color:#262626;letter-spacing:0.75px;-webkit-text-stroke:0.12px #dce6f1;">4/12/2004</div>
<div class="t" style="right:1364.00px;text-align:right;top:595.84px;font-size:19.8px;line-height:19.8px;font-weight:400;color:#262626;-webkit-text-stroke:0.12px #ffffcc;">2,080.0</div>
<div class="t" style="right:1249.20px;text-align:right;top:595.84px;font-size:19.8px;line-height:19.8px;font-weight:400;color:#262626;-webkit-text-stroke:0.12px #dce6f1;">92.75</div>
<div class="t" style="right:1127.60px;text-align:right;top:595.84px;font-size:19.8px;line-height:19.8px;font-weight:400;color:#262626;-webkit-text-stroke:0.12px #ffffcc;">192,920</div>
<div class="t" style="right:752.40px;text-align:right;top:595.84px;font-size:19.8px;line-height:19.8px;font-weight:400;color:#262626;-webkit-text-stroke:0.12px #dce6f1;">92.75</div>
<div class="t" style="right:658.60px;text-align:right;top:595.84px;font-size:19.8px;line-height:19.8px;font-weight:400;color:#262626;-webkit-text-stroke:0.12px #dce6f1;">192,920</div>
<div class="t" style="right:427.80px;text-align:right;top:595.84px;font-size:19.8px;line-height:19.8px;font-weight:400;color:#262626;-webkit-text-stroke:0.12px #dce6f1;">16,385</div>
<div class="t" style="right:318.50px;text-align:right;top:595.84px;font-size:19.8px;line-height:19.8px;font-weight:400;color:#262626;-webkit-text-stroke:0.12px #dce6f1;">14,799</div>
<div class="t" style="right:210.10px;text-align:right;top:595.84px;font-size:19.8px;line-height:19.8px;font-weight:400;color:#262626;-webkit-text-stroke:0.12px #dce6f1;">16,385</div>
<div class="t" style="right:100.30px;text-align:right;top:595.84px;font-size:19.8px;line-height:19.8px;font-weight:400;color:#262626;-webkit-text-stroke:0.12px #dce6f1;">15,856</div>
<div class="t" style="left:203.50px;top:625.07px;font-size:20px;line-height:20px;font-weight:400;color:#262626;-webkit-text-stroke:0.12px #dce6f1;">Dustin McCann</div>
<div class="t" style="left:486.00px;top:625.07px;font-size:20px;line-height:20px;font-weight:400;color:#262626;-webkit-text-stroke:0.12px #ffffcc;">COO</div>
<div class="t" style="left:221.30px;width:1200px;text-align:center;top:625.84px;font-size:19.8px;line-height:19.8px;font-weight:400;color:#262626;letter-spacing:0.75px;-webkit-text-stroke:0.12px #dce6f1;">7/15/2008</div>
<div class="t" style="right:1364.00px;text-align:right;top:625.84px;font-size:19.8px;line-height:19.8px;font-weight:400;color:#262626;-webkit-text-stroke:0.12px #ffffcc;">2,080.0</div>
<div class="t" style="right:1249.20px;text-align:right;top:625.84px;font-size:19.8px;line-height:19.8px;font-weight:400;color:#262626;-webkit-text-stroke:0.12px #dce6f1;">91.88</div>
<div class="t" style="right:1127.60px;text-align:right;top:625.84px;font-size:19.8px;line-height:19.8px;font-weight:400;color:#262626;-webkit-text-stroke:0.12px #ffffcc;">191,115</div>
<div class="t" style="right:941.60px;text-align:right;top:625.84px;font-size:19.8px;line-height:19.8px;font-weight:400;color:#262626;-webkit-text-stroke:0.12px #ffffcc;">10.00%</div>
<div class="t" style="right:752.40px;text-align:right;top:625.84px;font-size:19.8px;line-height:19.8px;font-weight:400;color:#262626;-webkit-text-stroke:0.12px #dce6f1;">101.07</div>
<div class="t" style="right:658.60px;text-align:right;top:625.84px;font-size:19.8px;line-height:19.8px;font-weight:400;color:#262626;-webkit-text-stroke:0.12px #dce6f1;">210,227</div>
<div class="t" style="left:1365.60px;width:1200px;text-align:center;top:625.84px;font-size:19.8px;line-height:19.8px;font-weight:400;color:#262626;-webkit-text-stroke:0.12px #ffffcc;">Y</div>
<div class="t" style="right:427.80px;text-align:right;top:625.84px;font-size:19.8px;line-height:19.8px;font-weight:400;color:#262626;-webkit-text-stroke:0.12px #dce6f1;">16,232</div>
<div class="t" style="right:318.50px;text-align:right;top:625.84px;font-size:19.8px;line-height:19.8px;font-weight:400;color:#262626;-webkit-text-stroke:0.12px #dce6f1;">14,661</div>
<div class="t" style="right:210.10px;text-align:right;top:625.84px;font-size:19.8px;line-height:19.8px;font-weight:400;color:#262626;-webkit-text-stroke:0.12px #dce6f1;">16,232</div>
<div class="t" style="right:100.30px;text-align:right;top:625.84px;font-size:19.8px;line-height:19.8px;font-weight:400;color:#262626;-webkit-text-stroke:0.12px #dce6f1;">15,708</div>
<div class="t" style="left:203.50px;top:655.07px;font-size:20px;line-height:20px;font-weight:400;color:#262626;-webkit-text-stroke:0.12px #dce6f1;">Justin Posada</div>
<div class="t" style="left:486.00px;top:655.07px;font-size:20px;line-height:20px;font-weight:400;color:#262626;-webkit-text-stroke:0.12px #ffffcc;">Administrative Assistant</div>
<div class="t" style="left:221.30px;width:1200px;text-align:center;top:655.84px;font-size:19.8px;line-height:19.8px;font-weight:400;color:#262626;letter-spacing:0.75px;-webkit-text-stroke:0.12px #dce6f1;">5/3/2008</div>
<div class="t" style="right:1364.00px;text-align:right;top:655.84px;font-size:19.8px;line-height:19.8px;font-weight:400;color:#262626;-webkit-text-stroke:0.12px #ffffcc;">2,080.0</div>
<div class="t" style="right:1249.20px;text-align:right;top:655.84px;font-size:19.8px;line-height:19.8px;font-weight:400;color:#262626;-webkit-text-stroke:0.12px #dce6f1;">26.25</div>
<div class="t" style="right:1127.60px;text-align:right;top:655.84px;font-size:19.8px;line-height:19.8px;font-weight:400;color:#262626;-webkit-text-stroke:0.12px #ffffcc;">54,600</div>
<div class="t" style="right:752.40px;text-align:right;top:655.84px;font-size:19.8px;line-height:19.8px;font-weight:400;color:#262626;-webkit-text-stroke:0.12px #dce6f1;">26.25</div>
<div class="t" style="right:658.60px;text-align:right;top:655.84px;font-size:19.8px;line-height:19.8px;font-weight:400;color:#262626;-webkit-text-stroke:0.12px #dce6f1;">54,600</div>
<div class="t" style="right:427.80px;text-align:right;top:655.84px;font-size:19.8px;line-height:19.8px;font-weight:400;color:#262626;-webkit-text-stroke:0.12px #dce6f1;">4,637</div>
<div class="t" style="right:318.50px;text-align:right;top:655.84px;font-size:19.8px;line-height:19.8px;font-weight:400;color:#262626;-webkit-text-stroke:0.12px #dce6f1;">4,188</div>
<div class="t" style="right:210.10px;text-align:right;top:655.84px;font-size:19.8px;line-height:19.8px;font-weight:400;color:#262626;-webkit-text-stroke:0.12px #dce6f1;">4,637</div>
<div class="t" style="right:100.30px;text-align:right;top:655.84px;font-size:19.8px;line-height:19.8px;font-weight:400;color:#262626;-webkit-text-stroke:0.12px #dce6f1;">4,488</div>
<div class="t" style="left:203.50px;top:685.07px;font-size:20px;line-height:20px;font-weight:400;color:#262626;-webkit-text-stroke:0.12px #dce6f1;">Joanne Suzuki</div>
<div class="t" style="left:486.00px;top:685.07px;font-size:20px;line-height:20px;font-weight:400;color:#262626;-webkit-text-stroke:0.12px #ffffcc;">Administrative Assistant</div>
<div class="t" style="left:221.30px;width:1200px;text-align:center;top:685.84px;font-size:19.8px;line-height:19.8px;font-weight:400;color:#262626;letter-spacing:0.75px;-webkit-text-stroke:0.12px #dce6f1;">12/10/1997</div>
<div class="t" style="right:1364.00px;text-align:right;top:685.84px;font-size:19.8px;line-height:19.8px;font-weight:400;color:#262626;-webkit-text-stroke:0.12px #ffffcc;">2,080.0</div>
<div class="t" style="right:1249.20px;text-align:right;top:685.84px;font-size:19.8px;line-height:19.8px;font-weight:400;color:#262626;-webkit-text-stroke:0.12px #dce6f1;">21.88</div>
<div class="t" style="right:1127.60px;text-align:right;top:685.84px;font-size:19.8px;line-height:19.8px;font-weight:400;color:#262626;-webkit-text-stroke:0.12px #ffffcc;">45,515</div>
<div class="t" style="right:752.40px;text-align:right;top:685.84px;font-size:19.8px;line-height:19.8px;font-weight:400;color:#262626;-webkit-text-stroke:0.12px #dce6f1;">21.88</div>
<div class="t" style="right:658.60px;text-align:right;top:685.84px;font-size:19.8px;line-height:19.8px;font-weight:400;color:#262626;-webkit-text-stroke:0.12px #dce6f1;">45,515</div>
<div class="t" style="right:427.80px;text-align:right;top:685.84px;font-size:19.8px;line-height:19.8px;font-weight:400;color:#262626;-webkit-text-stroke:0.12px #dce6f1;">3,866</div>
<div class="t" style="right:318.50px;text-align:right;top:685.84px;font-size:19.8px;line-height:19.8px;font-weight:400;color:#262626;-webkit-text-stroke:0.12px #dce6f1;">3,492</div>
<div class="t" style="right:210.10px;text-align:right;top:685.84px;font-size:19.8px;line-height:19.8px;font-weight:400;color:#262626;-webkit-text-stroke:0.12px #dce6f1;">3,866</div>
<div class="t" style="right:100.30px;text-align:right;top:685.84px;font-size:19.8px;line-height:19.8px;font-weight:400;color:#262626;-webkit-text-stroke:0.12px #dce6f1;">3,741</div>
<div class="t" style="left:203.50px;top:715.07px;font-size:20px;line-height:20px;font-weight:400;color:#262626;-webkit-text-stroke:0.12px #dce6f1;">Chris Molina</div>
<div class="t" style="left:486.00px;top:715.07px;font-size:20px;line-height:20px;font-weight:400;color:#262626;-webkit-text-stroke:0.12px #ffffcc;">Administrative Assistant</div>
<div class="t" style="left:221.30px;width:1200px;text-align:center;top:715.84px;font-size:19.8px;line-height:19.8px;font-weight:400;color:#262626;letter-spacing:0.75px;-webkit-text-stroke:0.12px #dce6f1;">7/7/2007</div>
<div class="t" style="right:1364.00px;text-align:right;top:715.84px;font-size:19.8px;line-height:19.8px;font-weight:400;color:#262626;-webkit-text-stroke:0.12px #ffffcc;">2,080.0</div>
<div class="t" style="right:1249.20px;text-align:right;top:715.84px;font-size:19.8px;line-height:19.8px;font-weight:400;color:#262626;-webkit-text-stroke:0.12px #dce6f1;">24.58</div>
<div class="t" style="right:1127.60px;text-align:right;top:715.84px;font-size:19.8px;line-height:19.8px;font-weight:400;color:#262626;-webkit-text-stroke:0.12px #ffffcc;">51,135</div>
<div class="t" style="right:752.40px;text-align:right;top:715.84px;font-size:19.8px;line-height:19.8px;font-weight:400;color:#262626;-webkit-text-stroke:0.12px #dce6f1;">24.58</div>
<div class="t" style="right:658.60px;text-align:right;top:715.84px;font-size:19.8px;line-height:19.8px;font-weight:400;color:#262626;-webkit-text-stroke:0.12px #dce6f1;">51,135</div>
<div class="t" style="right:427.80px;text-align:right;top:715.84px;font-size:19.8px;line-height:19.8px;font-weight:400;color:#262626;-webkit-text-stroke:0.12px #dce6f1;">4,343</div>
<div class="t" style="right:318.50px;text-align:right;top:715.84px;font-size:19.8px;line-height:19.8px;font-weight:400;color:#262626;-webkit-text-stroke:0.12px #dce6f1;">3,923</div>
<div class="t" style="right:210.10px;text-align:right;top:715.84px;font-size:19.8px;line-height:19.8px;font-weight:400;color:#262626;-webkit-text-stroke:0.12px #dce6f1;">4,343</div>
<div class="t" style="right:100.30px;text-align:right;top:715.84px;font-size:19.8px;line-height:19.8px;font-weight:400;color:#262626;-webkit-text-stroke:0.12px #dce6f1;">4,203</div>
<div class="t" style="left:203.50px;top:745.07px;font-size:20px;line-height:20px;font-weight:400;color:#262626;-webkit-text-stroke:0.12px #dce6f1;">Christine Montero</div>
<div class="t" style="left:486.00px;top:745.07px;font-size:20px;line-height:20px;font-weight:400;color:#262626;-webkit-text-stroke:0.12px #ffffcc;">Office Manager</div>
<div class="t" style="left:221.30px;width:1200px;text-align:center;top:745.84px;font-size:19.8px;line-height:19.8px;font-weight:400;color:#262626;letter-spacing:0.75px;-webkit-text-stroke:0.12px #dce6f1;">6/6/2006</div>
<div class="t" style="right:1364.00px;text-align:right;top:745.84px;font-size:19.8px;line-height:19.8px;font-weight:400;color:#262626;-webkit-text-stroke:0.12px #ffffcc;">2,080.0</div>
<div class="t" style="right:1249.20px;text-align:right;top:745.84px;font-size:19.8px;line-height:19.8px;font-weight:400;color:#262626;-webkit-text-stroke:0.12px #dce6f1;">26.47</div>
<div class="t" style="right:1127.60px;text-align:right;top:745.84px;font-size:19.8px;line-height:19.8px;font-weight:400;color:#262626;-webkit-text-stroke:0.12px #ffffcc;">55,066</div>
<div class="t" style="right:941.60px;text-align:right;top:745.84px;font-size:19.8px;line-height:19.8px;font-weight:400;color:#262626;-webkit-text-stroke:0.12px #ffffcc;">50.00%</div>
<div class="t" style="right:752.40px;text-align:right;top:745.84px;font-size:19.8px;line-height:19.8px;font-weight:400;color:#262626;-webkit-text-stroke:0.12px #dce6f1;">39.71</div>
<div class="t" style="right:658.60px;text-align:right;top:745.84px;font-size:19.8px;line-height:19.8px;font-weight:400;color:#262626;-webkit-text-stroke:0.12px #dce6f1;">82,599</div>
<div class="t" style="right:427.80px;text-align:right;top:745.84px;font-size:19.8px;line-height:19.8px;font-weight:400;color:#262626;-webkit-text-stroke:0.12px #dce6f1;">4,677</div>
<div class="t" style="right:318.50px;text-align:right;top:745.84px;font-size:19.8px;line-height:19.8px;font-weight:400;color:#262626;-webkit-text-stroke:0.12px #dce6f1;">4,224</div>
<div class="t" style="right:210.10px;text-align:right;top:745.84px;font-size:19.8px;line-height:19.8px;font-weight:400;color:#262626;-webkit-text-stroke:0.12px #dce6f1;">4,677</div>
<div class="t" style="right:100.30px;text-align:right;top:745.84px;font-size:19.8px;line-height:19.8px;font-weight:400;color:#262626;-webkit-text-stroke:0.12px #dce6f1;">4,526</div>
<div class="t" style="left:203.50px;top:775.07px;font-size:20px;line-height:20px;font-weight:400;color:#262626;-webkit-text-stroke:0.12px #dce6f1;">Luis Pierzynski</div>
<div class="t" style="left:486.00px;top:775.07px;font-size:20px;line-height:20px;font-weight:400;color:#262626;-webkit-text-stroke:0.12px #ffffcc;">Vice President</div>
<div class="t" style="left:221.30px;width:1200px;text-align:center;top:775.84px;font-size:19.8px;line-height:19.8px;font-weight:400;color:#262626;letter-spacing:0.75px;-webkit-text-stroke:0.12px #dce6f1;">5/5/2005</div>
<div class="t" style="right:1364.00px;text-align:right;top:775.84px;font-size:19.8px;line-height:19.8px;font-weight:400;color:#262626;-webkit-text-stroke:0.12px #ffffcc;">2,080.0</div>
<div class="t" style="right:1249.20px;text-align:right;top:775.84px;font-size:19.8px;line-height:19.8px;font-weight:400;color:#262626;-webkit-text-stroke:0.12px #dce6f1;">84.00</div>
<div class="t" style="right:1127.60px;text-align:right;top:775.84px;font-size:19.8px;line-height:19.8px;font-weight:400;color:#262626;-webkit-text-stroke:0.12px #ffffcc;">174,720</div>
<div class="t" style="right:752.40px;text-align:right;top:775.84px;font-size:19.8px;line-height:19.8px;font-weight:400;color:#262626;-webkit-text-stroke:0.12px #dce6f1;">84.00</div>
<div class="t" style="right:658.60px;text-align:right;top:775.84px;font-size:19.8px;line-height:19.8px;font-weight:400;color:#262626;-webkit-text-stroke:0.12px #dce6f1;">174,720</div>
<div class="t" style="right:427.80px;text-align:right;top:775.84px;font-size:19.8px;line-height:19.8px;font-weight:400;color:#262626;-webkit-text-stroke:0.12px #dce6f1;">14,839</div>
<div class="t" style="right:318.50px;text-align:right;top:775.84px;font-size:19.8px;line-height:19.8px;font-weight:400;color:#262626;-webkit-text-stroke:0.12px #dce6f1;">13,403</div>
<div class="t" style="right:210.10px;text-align:right;top:775.84px;font-size:19.8px;line-height:19.8px;font-weight:400;color:#262626;-webkit-text-stroke:0.12px #dce6f1;">14,839</div>
<div class="t" style="right:100.30px;text-align:right;top:775.84px;font-size:19.8px;line-height:19.8px;font-weight:400;color:#262626;-webkit-text-stroke:0.12px #dce6f1;">14,361</div>
<div class="t" style="left:203.50px;top:805.07px;font-size:20px;line-height:20px;font-weight:400;color:#262626;-webkit-text-stroke:0.12px #dce6f1;">Tracy Molina</div>
<div class="t" style="left:486.00px;top:805.07px;font-size:20px;line-height:20px;font-weight:400;color:#262626;-webkit-text-stroke:0.12px #ffffcc;">Vice President</div>
<div class="t" style="left:221.30px;width:1200px;text-align:center;top:805.84px;font-size:19.8px;line-height:19.8px;font-weight:400;color:#262626;letter-spacing:0.75px;-webkit-text-stroke:0.12px #dce6f1;">4/4/2004</div>
<div class="t" style="right:1364.00px;text-align:right;top:805.84px;font-size:19.8px;line-height:19.8px;font-weight:400;color:#262626;-webkit-text-stroke:0.12px #ffffcc;">2,080.0</div>
<div class="t" style="right:1249.20px;text-align:right;top:805.84px;font-size:19.8px;line-height:19.8px;font-weight:400;color:#262626;-webkit-text-stroke:0.12px #dce6f1;">83.13</div>
<div class="t" style="right:1127.60px;text-align:right;top:805.84px;font-size:19.8px;line-height:19.8px;font-weight:400;color:#262626;-webkit-text-stroke:0.12px #ffffcc;">172,915</div>
<div class="t" style="right:941.60px;text-align:right;top:805.84px;font-size:19.8px;line-height:19.8px;font-weight:400;color:#262626;-webkit-text-stroke:0.12px #ffffcc;">-10.00%</div>
<div class="t" style="right:752.40px;text-align:right;top:805.84px;font-size:19.8px;line-height:19.8px;font-weight:400;color:#262626;-webkit-text-stroke:0.12px #dce6f1;">74.82</div>
<div class="t" style="right:658.60px;text-align:right;top:805.84px;font-size:19.8px;line-height:19.8px;font-weight:400;color:#262626;-webkit-text-stroke:0.12px #dce6f1;">155,624</div>
<div class="t" style="right:427.80px;text-align:right;top:805.84px;font-size:19.8px;line-height:19.8px;font-weight:400;color:#262626;-webkit-text-stroke:0.12px #dce6f1;">14,686</div>
<div class="t" style="right:318.50px;text-align:right;top:805.84px;font-size:19.8px;line-height:19.8px;font-weight:400;color:#262626;-webkit-text-stroke:0.12px #dce6f1;">13,265</div>
<div class="t" style="right:210.10px;text-align:right;top:805.84px;font-size:19.8px;line-height:19.8px;font-weight:400;color:#262626;-webkit-text-stroke:0.12px #dce6f1;">14,686</div>
<div class="t" style="right:100.30px;text-align:right;top:805.84px;font-size:19.8px;line-height:19.8px;font-weight:400;color:#262626;-webkit-text-stroke:0.12px #dce6f1;">14,212</div>
<div class="t" style="right:752.40px;text-align:right;top:835.84px;font-size:19.8px;line-height:19.8px;font-weight:400;color:#262626;-webkit-text-stroke:0.12px #dce6f1;">0.00</div>
<div class="t" style="right:658.60px;text-align:right;top:835.84px;font-size:19.8px;line-height:19.8px;font-weight:400;color:#262626;-webkit-text-stroke:0.12px #dce6f1;">0</div>
<div class="t" style="right:427.80px;text-align:right;top:835.84px;font-size:19.8px;line-height:19.8px;font-weight:400;color:#262626;-webkit-text-stroke:0.12px #dce6f1;">0</div>
<div class="t" style="right:318.50px;text-align:right;top:835.84px;font-size:19.8px;line-height:19.8px;font-weight:400;color:#262626;-webkit-text-stroke:0.12px #dce6f1;">0</div>
<div class="t" style="right:210.10px;text-align:right;top:835.84px;font-size:19.8px;line-height:19.8px;font-weight:400;color:#262626;-webkit-text-stroke:0.12px #dce6f1;">0</div>
<div class="t" style="right:100.30px;text-align:right;top:835.84px;font-size:19.8px;line-height:19.8px;font-weight:400;color:#262626;-webkit-text-stroke:0.12px #dce6f1;">0</div>
<div class="t" style="right:752.40px;text-align:right;top:865.84px;font-size:19.8px;line-height:19.8px;font-weight:400;color:#262626;-webkit-text-stroke:0.12px #dce6f1;">0.00</div>
<div class="t" style="right:658.60px;text-align:right;top:865.84px;font-size:19.8px;line-height:19.8px;font-weight:400;color:#262626;-webkit-text-stroke:0.12px #dce6f1;">0</div>
<div class="t" style="right:427.80px;text-align:right;top:865.84px;font-size:19.8px;line-height:19.8px;font-weight:400;color:#262626;-webkit-text-stroke:0.12px #dce6f1;">0</div>
<div class="t" style="right:318.50px;text-align:right;top:865.84px;font-size:19.8px;line-height:19.8px;font-weight:400;color:#262626;-webkit-text-stroke:0.12px #dce6f1;">0</div>
<div class="t" style="right:210.10px;text-align:right;top:865.84px;font-size:19.8px;line-height:19.8px;font-weight:400;color:#262626;-webkit-text-stroke:0.12px #dce6f1;">0</div>
<div class="t" style="right:100.30px;text-align:right;top:865.84px;font-size:19.8px;line-height:19.8px;font-weight:400;color:#262626;-webkit-text-stroke:0.12px #dce6f1;">0</div>
<div class="t" style="right:752.40px;text-align:right;top:895.84px;font-size:19.8px;line-height:19.8px;font-weight:400;color:#262626;-webkit-text-stroke:0.12px #dce6f1;">0.00</div>
<div class="t" style="right:658.60px;text-align:right;top:895.84px;font-size:19.8px;line-height:19.8px;font-weight:400;color:#262626;-webkit-text-stroke:0.12px #dce6f1;">0</div>
<div class="t" style="right:427.80px;text-align:right;top:895.84px;font-size:19.8px;line-height:19.8px;font-weight:400;color:#262626;-webkit-text-stroke:0.12px #dce6f1;">0</div>
<div class="t" style="right:318.50px;text-align:right;top:895.84px;font-size:19.8px;line-height:19.8px;font-weight:400;color:#262626;-webkit-text-stroke:0.12px #dce6f1;">0</div>
<div class="t" style="right:210.10px;text-align:right;top:895.84px;font-size:19.8px;line-height:19.8px;font-weight:400;color:#262626;-webkit-text-stroke:0.12px #dce6f1;">0</div>
<div class="t" style="right:100.30px;text-align:right;top:895.84px;font-size:19.8px;line-height:19.8px;font-weight:400;color:#262626;-webkit-text-stroke:0.12px #dce6f1;">0</div>
<div class="t" style="right:752.40px;text-align:right;top:925.84px;font-size:19.8px;line-height:19.8px;font-weight:400;color:#262626;-webkit-text-stroke:0.12px #dce6f1;">0.00</div>
<div class="t" style="right:658.60px;text-align:right;top:925.84px;font-size:19.8px;line-height:19.8px;font-weight:400;color:#262626;-webkit-text-stroke:0.12px #dce6f1;">0</div>
<div class="t" style="right:427.80px;text-align:right;top:925.84px;font-size:19.8px;line-height:19.8px;font-weight:400;color:#262626;-webkit-text-stroke:0.12px #dce6f1;">0</div>
<div class="t" style="right:318.50px;text-align:right;top:925.84px;font-size:19.8px;line-height:19.8px;font-weight:400;color:#262626;-webkit-text-stroke:0.12px #dce6f1;">0</div>
<div class="t" style="right:210.10px;text-align:right;top:925.84px;font-size:19.8px;line-height:19.8px;font-weight:400;color:#262626;-webkit-text-stroke:0.12px #dce6f1;">0</div>
<div class="t" style="right:100.30px;text-align:right;top:925.84px;font-size:19.8px;line-height:19.8px;font-weight:400;color:#262626;-webkit-text-stroke:0.12px #dce6f1;">0</div>
<div class="t" style="right:752.40px;text-align:right;top:955.84px;font-size:19.8px;line-height:19.8px;font-weight:400;color:#262626;-webkit-text-stroke:0.12px #dce6f1;">0.00</div>
<div class="t" style="right:658.60px;text-align:right;top:955.84px;font-size:19.8px;line-height:19.8px;font-weight:400;color:#262626;-webkit-text-stroke:0.12px #dce6f1;">0</div>
<div class="t" style="right:427.80px;text-align:right;top:955.84px;font-size:19.8px;line-height:19.8px;font-weight:400;color:#262626;-webkit-text-stroke:0.12px #dce6f1;">0</div>
<div class="t" style="right:318.50px;text-align:right;top:955.84px;font-size:19.8px;line-height:19.8px;font-weight:400;color:#262626;-webkit-text-stroke:0.12px #dce6f1;">0</div>
<div class="t" style="right:210.10px;text-align:right;top:955.84px;font-size:19.8px;line-height:19.8px;font-weight:400;color:#262626;-webkit-text-stroke:0.12px #dce6f1;">0</div>
<div class="t" style="right:100.30px;text-align:right;top:955.84px;font-size:19.8px;line-height:19.8px;font-weight:400;color:#262626;-webkit-text-stroke:0.12px #dce6f1;">0</div>
<div class="t" style="left:1814.50px;top:1000.07px;font-size:20px;line-height:20px;font-weight:400;color:#262626;">Total Full Time</div>
<div class="t" style="right:427.80px;text-align:right;top:1000.24px;font-size:19.8px;line-height:19.8px;font-weight:400;color:#262626;">96,566</div>
<div class="t" style="right:318.50px;text-align:right;top:1000.24px;font-size:19.8px;line-height:19.8px;font-weight:400;color:#262626;">87,221</div>
<div class="t" style="right:210.10px;text-align:right;top:1000.24px;font-size:19.8px;line-height:19.8px;font-weight:400;color:#262626;">96,566</div>
<div class="t" style="right:100.30px;text-align:right;top:1000.24px;font-size:19.8px;line-height:19.8px;font-weight:400;color:#262626;">93,451</div>
<div class="t" style="left:203.00px;top:1043.73px;font-size:18.75px;line-height:18.75px;font-weight:700;color:#1a1a1a;">Part Time Employees</div>
<div style="position:absolute;left:0;top:0;width:2560px;height:1322px;overflow:hidden;">
<div class="t" style="left:203.50px;top:1072.67px;font-size:20px;line-height:20px;font-weight:400;color:#262626;-webkit-text-stroke:0.12px #dce6f1;">Chris Martin</div>
<div class="t" style="left:486.00px;top:1072.67px;font-size:20px;line-height:20px;font-weight:400;color:#262626;-webkit-text-stroke:0.12px #ffffcc;">Receptionist</div>
<div class="t" style="left:221.30px;width:1200px;text-align:center;top:1073.44px;font-size:19.8px;line-height:19.8px;font-weight:400;color:#262626;letter-spacing:0.75px;-webkit-text-stroke:0.12px #dce6f1;">4/12/2004</div>
<div class="t" style="right:1364.00px;text-align:right;top:1073.44px;font-size:19.8px;line-height:19.8px;font-weight:400;color:#262626;-webkit-text-stroke:0.12px #ffffcc;">2,080.0</div>
<div class="t" style="right:1249.20px;text-align:right;top:1073.44px;font-size:19.8px;line-height:19.8px;font-weight:400;color:#262626;-webkit-text-stroke:0.12px #ffffcc;">15.00</div>
<div class="t" style="right:1127.60px;text-align:right;top:1073.44px;font-size:19.8px;line-height:19.8px;font-weight:400;color:#262626;-webkit-text-stroke:0.12px #dce6f1;">31,200.00</div>
<div class="t" style="right:752.40px;text-align:right;top:1073.44px;font-size:19.8px;line-height:19.8px;font-weight:400;color:#262626;-webkit-text-stroke:0.12px #dce6f1;">15.00</div>
<div class="t" style="right:658.60px;text-align:right;top:1073.44px;font-size:19.8px;line-height:19.8px;font-weight:400;color:#262626;-webkit-text-stroke:0.12px #dce6f1;">31,200</div>
<div class="t" style="right:427.80px;text-align:right;top:1073.44px;font-size:19.8px;line-height:19.8px;font-weight:400;color:#262626;-webkit-text-stroke:0.12px #dce6f1;">2,650</div>
<div class="t" style="right:318.50px;text-align:right;top:1073.44px;font-size:19.8px;line-height:19.8px;font-weight:400;color:#262626;-webkit-text-stroke:0.12px #dce6f1;">2,393</div>
<div class="t" style="right:210.10px;text-align:right;top:1073.44px;font-size:19.8px;line-height:19.8px;font-weight:400;color:#262626;-webkit-text-stroke:0.12px #dce6f1;">2,650</div>
<div class="t" style="right:100.30px;text-align:right;top:1073.44px;font-size:19.8px;line-height:19.8px;font-weight:400;color:#262626;-webkit-text-stroke:0.12px #dce6f1;">2,564</div>
<div class="t" style="left:203.50px;top:1102.67px;font-size:20px;line-height:20px;font-weight:400;color:#262626;-webkit-text-stroke:0.12px #dce6f1;">Sophia Baker</div>
<div class="t" style="left:486.00px;top:1102.67px;font-size:20px;line-height:20px;font-weight:400;color:#262626;-webkit-text-stroke:0.12px #ffffcc;">Office Manager</div>
<div class="t" style="left:221.30px;width:1200px;text-align:center;top:1103.44px;font-size:19.8px;line-height:19.8px;font-weight:400;color:#262626;letter-spacing:0.75px;-webkit-text-stroke:0.12px #dce6f1;">7/15/2008</div>
<div class="t" style="right:1364.00px;text-align:right;top:1103.44px;font-size:19.8px;line-height:19.8px;font-weight:400;color:#262626;-webkit-text-stroke:0.12px #ffffcc;">2,080.0</div>
<div class="t" style="right:1249.20px;text-align:right;top:1103.44px;font-size:19.8px;line-height:19.8px;font-weight:400;color:#262626;-webkit-text-stroke:0.12px #ffffcc;">17.00</div>
<div class="t" style="right:1127.60px;text-align:right;top:1103.44px;font-size:19.8px;line-height:19.8px;font-weight:400;color:#262626;-webkit-text-stroke:0.12px #dce6f1;">35,360.00</div>
<div class="t" style="right:941.60px;text-align:right;top:1103.44px;font-size:19.8px;line-height:19.8px;font-weight:400;color:#262626;-webkit-text-stroke:0.12px #ffffcc;">20.00%</div>
<div class="t" style="right:752.40px;text-align:right;top:1103.44px;font-size:19.8px;line-height:19.8px;font-weight:400;color:#262626;-webkit-text-stroke:0.12px #dce6f1;">20.40</div>
<div class="t" style="right:658.60px;text-align:right;top:1103.44px;font-size:19.8px;line-height:19.8px;font-weight:400;color:#262626;-webkit-text-stroke:0.12px #dce6f1;">42,432</div>
<div class="t" style="left:1365.60px;width:1200px;text-align:center;top:1103.44px;font-size:19.8px;line-height:19.8px;font-weight:400;color:#262626;-webkit-text-stroke:0.12px #ffffcc;">N</div>
<div class="t" style="right:427.80px;text-align:right;top:1103.44px;font-size:19.8px;line-height:19.8px;font-weight:400;color:#262626;-webkit-text-stroke:0.12px #dce6f1;">3,003</div>
<div class="t" style="right:318.50px;text-align:right;top:1103.44px;font-size:19.8px;line-height:19.8px;font-weight:400;color:#262626;-webkit-text-stroke:0.12px #dce6f1;">2,713</div>
<div class="t" style="right:210.10px;text-align:right;top:1103.44px;font-size:19.8px;line-height:19.8px;font-weight:400;color:#262626;-webkit-text-stroke:0.12px #dce6f1;">3,003</div>
<div class="t" style="right:100.30px;text-align:right;top:1103.44px;font-size:19.8px;line-height:19.8px;font-weight:400;color:#262626;-webkit-text-stroke:0.12px #dce6f1;">2,906</div>
<div class="t" style="left:203.50px;top:1132.67px;font-size:20px;line-height:20px;font-weight:400;color:#262626;-webkit-text-stroke:0.12px #dce6f1;">Clint Doumit</div>
<div class="t" style="left:486.00px;top:1132.67px;font-size:20px;line-height:20px;font-weight:400;color:#262626;-webkit-text-stroke:0.12px #ffffcc;">Receptionist</div>
<div class="t" style="left:221.30px;width:1200px;text-align:center;top:1133.44px;font-size:19.8px;line-height:19.8px;font-weight:400;color:#262626;letter-spacing:0.75px;-webkit-text-stroke:0.12px #dce6f1;">5/3/2008</div>
<div class="t" style="right:1364.00px;text-align:right;top:1133.44px;font-size:19.8px;line-height:19.8px;font-weight:400;color:#262626;-webkit-text-stroke:0.12px #ffffcc;">2,080.0</div>
<div class="t" style="right:1249.20px;text-align:right;top:1133.44px;font-size:19.8px;line-height:19.8px;font-weight:400;color:#262626;-webkit-text-stroke:0.12px #ffffcc;">18.00</div>
<div class="t" style="right:1127.60px;text-align:right;top:1133.44px;font-size:19.8px;line-height:19.8px;font-weight:400;color:#262626;-webkit-text-stroke:0.12px #dce6f1;">37,440.00</div>
<div class="t" style="right:752.40px;text-align:right;top:1133.44px;font-size:19.8px;line-height:19.8px;font-weight:400;color:#262626;-webkit-text-stroke:0.12px #dce6f1;">18.00</div>
<div class="t" style="right:658.60px;text-align:right;top:1133.44px;font-size:19.8px;line-height:19.8px;font-weight:400;color:#262626;-webkit-text-stroke:0.12px #dce6f1;">37,440</div>
<div class="t" style="right:427.80px;text-align:right;top:1133.44px;font-size:19.8px;line-height:19.8px;font-weight:400;color:#262626;-webkit-text-stroke:0.12px #dce6f1;">3,180</div>
<div class="t" style="right:318.50px;text-align:right;top:1133.44px;font-size:19.8px;line-height:19.8px;font-weight:400;color:#262626;-webkit-text-stroke:0.12px #dce6f1;">2,872</div>
<div class="t" style="right:210.10px;text-align:right;top:1133.44px;font-size:19.8px;line-height:19.8px;font-weight:400;color:#262626;-webkit-text-stroke:0.12px #dce6f1;">3,180</div>
<div class="t" style="right:100.30px;text-align:right;top:1133.44px;font-size:19.8px;line-height:19.8px;font-weight:400;color:#262626;-webkit-text-stroke:0.12px #dce6f1;">3,077</div>
<div class="t" style="left:203.50px;top:1162.67px;font-size:20px;line-height:20px;font-weight:400;color:#262626;-webkit-text-stroke:0.12px #dce6f1;">Orlando Iannetta</div>
<div class="t" style="left:486.00px;top:1162.67px;font-size:20px;line-height:20px;font-weight:400;color:#262626;-webkit-text-stroke:0.12px #ffffcc;">Contractor</div>
<div class="t" style="left:221.30px;width:1200px;text-align:center;top:1163.44px;font-size:19.8px;line-height:19.8px;font-weight:400;color:#262626;letter-spacing:0.75px;-webkit-text-stroke:0.12px #dce6f1;">12/10/1997</div>
<div class="t" style="right:1364.00px;text-align:right;top:1163.44px;font-size:19.8px;line-height:19.8px;font-weight:400;color:#262626;-webkit-text-stroke:0.12px #ffffcc;">2,080.0</div>
<div class="t" style="right:1249.20px;text-align:right;top:1163.44px;font-size:19.8px;line-height:19.8px;font-weight:400;color:#262626;-webkit-text-stroke:0.12px #ffffcc;">20.00</div>
<div class="t" style="right:1127.60px;text-align:right;top:1163.44px;font-size:19.8px;line-height:19.8px;font-weight:400;color:#262626;-webkit-text-stroke:0.12px #dce6f1;">41,600.00</div>
<div class="t" style="right:752.40px;text-align:right;top:1163.44px;font-size:19.8px;line-height:19.8px;font-weight:400;color:#262626;-webkit-text-stroke:0.12px #dce6f1;">20.00</div>
<div class="t" style="right:658.60px;text-align:right;top:1163.44px;font-size:19.8px;line-height:19.8px;font-weight:400;color:#262626;-webkit-text-stroke:0.12px #dce6f1;">41,600</div>
<div class="t" style="right:427.80px;text-align:right;top:1163.44px;font-size:19.8px;line-height:19.8px;font-weight:400;color:#262626;-webkit-text-stroke:0.12px #dce6f1;">3,533</div>
<div class="t" style="right:318.50px;text-align:right;top:1163.44px;font-size:19.8px;line-height:19.8px;font-weight:400;color:#262626;-webkit-text-stroke:0.12px #dce6f1;">3,191</div>
<div class="t" style="right:210.10px;text-align:right;top:1163.44px;font-size:19.8px;line-height:19.8px;font-weight:400;color:#262626;-webkit-text-stroke:0.12px #dce6f1;">3,533</div>
<div class="t" style="right:100.30px;text-align:right;top:1163.44px;font-size:19.8px;line-height:19.8px;font-weight:400;color:#262626;-webkit-text-stroke:0.12px #dce6f1;">3,419</div>
<div class="t" style="right:1127.60px;text-align:right;top:1193.44px;font-size:19.8px;line-height:19.8px;font-weight:400;color:#262626;-webkit-text-stroke:0.12px #dce6f1;">0.00</div>
<div class="t" style="right:752.40px;text-align:right;top:1193.44px;font-size:19.8px;line-height:19.8px;font-weight:400;color:#262626;-webkit-text-stroke:0.12px #dce6f1;">0.00</div>
<div class="t" style="right:658.60px;text-align:right;top:1193.44px;font-size:19.8px;line-height:19.8px;font-weight:400;color:#262626;-webkit-text-stroke:0.12px #dce6f1;">0</div>
<div class="t" style="right:427.80px;text-align:right;top:1193.44px;font-size:19.8px;line-height:19.8px;font-weight:400;color:#262626;-webkit-text-stroke:0.12px #dce6f1;">0</div>
<div class="t" style="right:318.50px;text-align:right;top:1193.44px;font-size:19.8px;line-height:19.8px;font-weight:400;color:#262626;-webkit-text-stroke:0.12px #dce6f1;">0</div>
<div class="t" style="right:210.10px;text-align:right;top:1193.44px;font-size:19.8px;line-height:19.8px;font-weight:400;color:#262626;-webkit-text-stroke:0.12px #dce6f1;">0</div>
<div class="t" style="right:100.30px;text-align:right;top:1193.44px;font-size:19.8px;line-height:19.8px;font-weight:400;color:#262626;-webkit-text-stroke:0.12px #dce6f1;">0</div>
<div class="t" style="right:1127.60px;text-align:right;top:1223.44px;font-size:19.8px;line-height:19.8px;font-weight:400;color:#262626;-webkit-text-stroke:0.12px #dce6f1;">0.00</div>
<div class="t" style="right:752.40px;text-align:right;top:1223.44px;font-size:19.8px;line-height:19.8px;font-weight:400;color:#262626;-webkit-text-stroke:0.12px #dce6f1;">0.00</div>
<div class="t" style="right:658.60px;text-align:right;top:1223.44px;font-size:19.8px;line-height:19.8px;font-weight:400;color:#262626;-webkit-text-stroke:0.12px #dce6f1;">0</div>
<div class="t" style="right:427.80px;text-align:right;top:1223.44px;font-size:19.8px;line-height:19.8px;font-weight:400;color:#262626;-webkit-text-stroke:0.12px #dce6f1;">0</div>
<div class="t" style="right:318.50px;text-align:right;top:1223.44px;font-size:19.8px;line-height:19.8px;font-weight:400;color:#262626;-webkit-text-stroke:0.12px #dce6f1;">0</div>
<div class="t" style="right:210.10px;text-align:right;top:1223.44px;font-size:19.8px;line-height:19.8px;font-weight:400;color:#262626;-webkit-text-stroke:0.12px #dce6f1;">0</div>
<div class="t" style="right:100.30px;text-align:right;top:1223.44px;font-size:19.8px;line-height:19.8px;font-weight:400;color:#262626;-webkit-text-stroke:0.12px #dce6f1;">0</div>
<div class="t" style="right:1127.60px;text-align:right;top:1253.44px;font-size:19.8px;line-height:19.8px;font-weight:400;color:#262626;-webkit-text-stroke:0.12px #dce6f1;">0.00</div>
<div class="t" style="right:752.40px;text-align:right;top:1253.44px;font-size:19.8px;line-height:19.8px;font-weight:400;color:#262626;-webkit-text-stroke:0.12px #dce6f1;">0.00</div>
<div class="t" style="right:658.60px;text-align:right;top:1253.44px;font-size:19.8px;line-height:19.8px;font-weight:400;color:#262626;-webkit-text-stroke:0.12px #dce6f1;">0</div>
<div class="t" style="right:427.80px;text-align:right;top:1253.44px;font-size:19.8px;line-height:19.8px;font-weight:400;color:#262626;-webkit-text-stroke:0.12px #dce6f1;">0</div>
<div class="t" style="right:318.50px;text-align:right;top:1253.44px;font-size:19.8px;line-height:19.8px;font-weight:400;color:#262626;-webkit-text-stroke:0.12px #dce6f1;">0</div>
<div class="t" style="right:210.10px;text-align:right;top:1253.44px;font-size:19.8px;line-height:19.8px;font-weight:400;color:#262626;-webkit-text-stroke:0.12px #dce6f1;">0</div>
<div class="t" style="right:100.30px;text-align:right;top:1253.44px;font-size:19.8px;line-height:19.8px;font-weight:400;color:#262626;-webkit-text-stroke:0.12px #dce6f1;">0</div>
<div class="t" style="right:1127.60px;text-align:right;top:1283.44px;font-size:19.8px;line-height:19.8px;font-weight:400;color:#262626;-webkit-text-stroke:0.12px #dce6f1;">0.00</div>
<div class="t" style="right:752.40px;text-align:right;top:1283.44px;font-size:19.8px;line-height:19.8px;font-weight:400;color:#262626;-webkit-text-stroke:0.12px #dce6f1;">0.00</div>
<div class="t" style="right:658.60px;text-align:right;top:1283.44px;font-size:19.8px;line-height:19.8px;font-weight:400;color:#262626;-webkit-text-stroke:0.12px #dce6f1;">0</div>
<div class="t" style="right:427.80px;text-align:right;top:1283.44px;font-size:19.8px;line-height:19.8px;font-weight:400;color:#262626;-webkit-text-stroke:0.12px #dce6f1;">0</div>
<div class="t" style="right:318.50px;text-align:right;top:1283.44px;font-size:19.8px;line-height:19.8px;font-weight:400;color:#262626;-webkit-text-stroke:0.12px #dce6f1;">0</div>
<div class="t" style="right:210.10px;text-align:right;top:1283.44px;font-size:19.8px;line-height:19.8px;font-weight:400;color:#262626;-webkit-text-stroke:0.12px #dce6f1;">0</div>
<div class="t" style="right:100.30px;text-align:right;top:1283.44px;font-size:19.8px;line-height:19.8px;font-weight:400;color:#262626;-webkit-text-stroke:0.12px #dce6f1;">0</div>
<div class="t" style="right:1127.60px;text-align:right;top:1313.44px;font-size:19.8px;line-height:19.8px;font-weight:400;color:#262626;-webkit-text-stroke:0.12px #dce6f1;">0.00</div>
<div class="t" style="right:752.40px;text-align:right;top:1313.44px;font-size:19.8px;line-height:19.8px;font-weight:400;color:#262626;-webkit-text-stroke:0.12px #dce6f1;">0.00</div>
<div class="t" style="right:658.60px;text-align:right;top:1313.44px;font-size:19.8px;line-height:19.8px;font-weight:400;color:#262626;-webkit-text-stroke:0.12px #dce6f1;">0</div>
<div class="t" style="right:427.80px;text-align:right;top:1313.44px;font-size:19.8px;line-height:19.8px;font-weight:400;color:#262626;-webkit-text-stroke:0.12px #dce6f1;">0</div>
<div class="t" style="right:318.50px;text-align:right;top:1313.44px;font-size:19.8px;line-height:19.8px;font-weight:400;color:#262626;-webkit-text-stroke:0.12px #dce6f1;">0</div>
<div class="t" style="right:210.10px;text-align:right;top:1313.44px;font-size:19.8px;line-height:19.8px;font-weight:400;color:#262626;-webkit-text-stroke:0.12px #dce6f1;">0</div>
<div class="t" style="right:100.30px;text-align:right;top:1313.44px;font-size:19.8px;line-height:19.8px;font-weight:400;color:#262626;-webkit-text-stroke:0.12px #dce6f1;">0</div>
</div>
<div class="r" style="left:2492.3px;top:289px;width:1.5px;height:1033px;background:#8c8c8c;"></div>
<div class="r" style="left:2494px;top:289px;width:30px;height:1033px;background:#dadada;"></div>
<div class="r" style="left:2521px;top:289px;width:3px;height:1033px;background:#e6e6e6;"></div>
<div class="r" style="left:2499px;top:289px;width:22px;height:22px;background:#ffffff;border:1.5px solid #a6a6a6;box-sizing:border-box;border-radius:3px 3px 0 0;"></div>
<div class="r" style="left:2499px;top:311px;width:22px;height:178px;background:#ffffff;border:1.5px solid #a6a6a6;box-sizing:border-box;"></div>
<div class="r" style="left:2499px;top:1301px;width:22px;height:21px;background:#ffffff;border:1.5px solid #a6a6a6;box-sizing:border-box;border-radius:0 0 3px 3px;"></div>
<svg style="left:2490px;top:280px" width="40" height="1050" viewBox="2490 280 40 1050"><path d="M2505,301.7 L2514.9,301.7 L2509.95,296.5 Z" fill="#6f6f6f"/><path d="M2505,1308.5 L2514.9,1308.5 L2509.95,1313.7 Z" fill="#6f6f6f"/></svg>
<div class="r" style="left:186px;top:1322px;width:2338px;height:42px;background:#e6e6e6;"></div>
<div class="r" style="left:186px;top:1322px;width:2307px;height:2px;background:#9c9c9c;"></div>
<div class="r" style="left:335.5px;top:1322px;width:102.0px;height:37px;background:#ffffff;border-left:1px solid #c9c9c9;border-right:1px solid #c9c9c9;box-sizing:border-box;"></div>
<div class="r" style="left:335px;top:1356px;width:103px;height:3.2999999999999545px;background:#217346;"></div>
<div class="t" style="left:353.80px;top:1330.06px;font-size:19.3px;line-height:19.3px;font-weight:700;color:#217346;">Payroll</div>
<div class="t" style="left:455.50px;top:1329.39px;font-size:20.1px;line-height:20.1px;font-weight:400;color:#5c5c5c;-webkit-text-stroke:0.3px #e6e6e6;">Directions</div>
<div class="r" style="left:571px;top:1328px;width:1.2000000000000455px;height:30px;background:#9a9a9a;"></div>
<svg style="left:210px;top:1330px" width="80" height="30" viewBox="210 1330 80 30"><path d="M231.6,1338.7 L231.6,1349 L224.7,1343.85 Z" fill="#c9c9c9"/><path d="M267.7,1338.7 L267.7,1349 L274.5,1343.85 Z" fill="#c9c9c9"/></svg>
<svg style="left:1540px;top:1330px" width="20" height="30" viewBox="1540 1330 20 30"><circle cx="1548" cy="1338.5" r="1" fill="#9a9a9a"/><circle cx="1548" cy="1344.5" r="1" fill="#9a9a9a"/><circle cx="1548" cy="1350.5" r="1" fill="#9a9a9a"/></svg>
<div class="r" style="left:1592px;top:1334px;width:878px;height:20px;background:#d8d8d8;"></div>
<div class="r" style="left:1569.5px;top:1333.5px;width:23.5px;height:21.0px;background:#fff;border:2px solid #a8a8a8;box-sizing:border-box;border-radius:3px 0 0 3px;"></div>
<div class="r" style="left:1591px;top:1333.5px;width:76px;height:21.0px;background:#fff;border:2px solid #a8a8a8;box-sizing:border-box;border-radius:0 3px 3px 0;"></div>
<div class="r" style="left:2469.5px;top:1333.5px;width:22.0px;height:21.0px;background:#fff;border:2px solid #a8a8a8;box-sizing:border-box;border-radius:3px;"></div>
<svg style="left:1560px;top:1330px" width="940" height="30" viewBox="1560 1330 940 30"><path d="M1583.5,1339 L1583.5,1349 L1577.5,1344 Z" fill="#555"/><path d="M2478,1339 L2478,1349 L2484,1344 Z" fill="#555"/></svg>
<div class="r" style="left:186px;top:1364px;width:2338px;height:42px;background:#323a46;"></div>
<div class="t" style="left:1170.00px;top:1376.59px;font-size:23.4px;line-height:23.4px;font-weight:400;color:#f2f2f2;-webkit-text-stroke:0.4px #323a46;">Spreading and Line item details</div>
<svg style="left:1500px;top:1370px" width="40" height="30" viewBox="1500 1370 40 30"><polyline points="1515.5,1389.8 1522.3,1382.3 1529.1,1389.8" fill="none" stroke="#fff" stroke-width="3.8"/></svg>
<svg style="left:0px;top:0px" width="2560" height="1442" viewBox="0 0 2560 1442"><path d="M-5,-5 L2565,-5 L2565,1447 L-5,1447 Z M0,40 C0,17.908 17.908,0 40,0 L2520,0 C2542.092,0 2560,17.908 2560,40 L2560,1402 C2560,1424.092 2542.092,1442 2520,1442 L40,1442 C17.908,1442 0,1424.092 0,1402 Z" fill="#fff" fill-rule="evenodd"/><path d="M0,40 C0,17.908 17.908,0 40,0 L2520,0 C2542.092,0 2560,17.908 2560,40 L2560,1402 C2560,1424.092 2542.092,1442 2520,1442 L40,1442 C17.908,1442 0,1424.092 0,1402 Z M6,40 C6,21.221799999999998 21.221799999999998,6 40,6 L2520,6 C2538.7782,6 2554,21.221799999999998 2554,40 L2554,1402 C2554,1420.7782 2538.7782,1436 2520,1436 L40,1436 C21.221799999999998,1436 6,1420.7782 6,1402 Z" fill="#b1b2b6" fill-rule="evenodd"/></svg>
</body></html>
